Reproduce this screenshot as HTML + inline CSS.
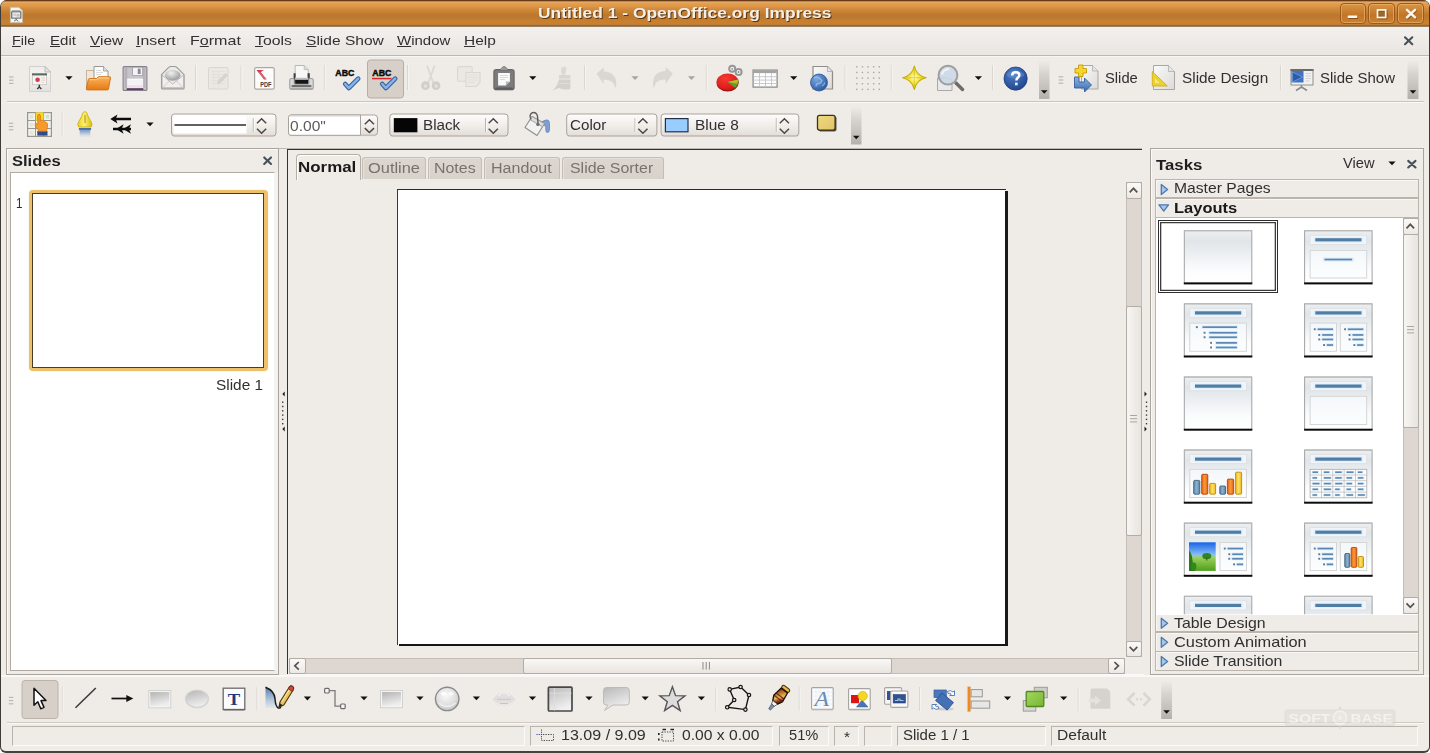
<!DOCTYPE html>
<html><head><meta charset="utf-8"><title>Untitled 1 - OpenOffice.org Impress</title>
<style>
html,body{margin:0;padding:0;background:#fff;}
body{width:1430px;height:753px;overflow:hidden;position:relative;font-family:"Liberation Sans",sans-serif;}
#w div{position:absolute;box-sizing:border-box;}
.t{position:absolute;white-space:nowrap;transform-origin:0 50%;}
u{text-decoration:underline;text-underline-offset:1px;}
#ic{position:absolute;left:0;top:0;}
</style></head>
<body><div id="w">
<div style="left:0px;top:0px;width:1430px;height:753px;background:#efebe7;border:1px solid #3e3a36;border-bottom:2px solid #45413d;border-radius:7px 7px 6px 6px;"></div>
<div style="left:1px;top:0px;width:1428px;height:27px;border-radius:6px 6px 0 0;background:linear-gradient(#6b3a14 0,#6b3a14 0.8px,#b98246 1.4px,#e2aa6a 2.2px,#e0a45c 3px,#de9c48 4.5px,#e09a44 6px,#d88a48 8px,#cd8836 10px,#c4842c 12px,#be7632 15px,#bc7a30 18px,#c8802c 21px,#cc7f2c 23px,#c2803a 24.4px,#8e6c40 25.2px,#866640 26px,#b09c80 27px);"></div>
<div style="left:1339.5px;top:3px;width:26.5px;height:21px;border:1px solid #9c5a1c;border-radius:4px;background:linear-gradient(#d89444,#c27526 60%,#cc8232);box-shadow:inset 0 0 0 1px rgba(240,190,120,.55);"></div>
<div style="left:1368.2px;top:3px;width:26.5px;height:21px;border:1px solid #9c5a1c;border-radius:4px;background:linear-gradient(#d89444,#c27526 60%,#cc8232);box-shadow:inset 0 0 0 1px rgba(240,190,120,.55);"></div>
<div style="left:1397.3px;top:3px;width:26.5px;height:21px;border:1px solid #9c5a1c;border-radius:4px;background:linear-gradient(#d89444,#c27526 60%,#cc8232);box-shadow:inset 0 0 0 1px rgba(240,190,120,.55);"></div>
<div style="left:1px;top:27px;width:1428px;height:29px;background:linear-gradient(#f3f1ee,#e9e5e1);border-bottom:1px solid #bcb7b0;"></div>
<div style="left:1px;top:56px;width:1428px;height:1px;background:#f8f6f4;"></div>
<div style="left:7px;top:101px;width:1417px;height:1px;background:#c9c4bd;"></div>
<div style="left:7px;top:102px;width:1417px;height:1px;background:#faf9f7;"></div>
<div style="left:6px;top:148px;width:273px;height:527px;border:1px solid #aaa49c;background:#efebe7;box-shadow:inset 1px 1px 0 #fbfaf9;"></div>
<div style="left:274px;top:172.5px;width:4.4px;height:498px;background:#f3f2f0;"></div>
<div style="left:10px;top:172px;width:265px;height:499px;border:1px solid #b0aaa2;border-right:1px solid #f6f5f3;background:#fff;"></div>
<div style="left:29.3px;top:189.7px;width:238.5px;height:180.9px;border-radius:4px;background:#edc06c;box-shadow:0 0 1.5px #f5dcae;"></div>
<div style="left:32.4px;top:193.1px;width:232.1px;height:174.6px;background:#fff;border:1.5px solid #4a3c24;"></div>
<div style="left:279px;top:148px;width:863.3px;height:1px;background:#bdb8b2;"></div>
<div style="left:286.8px;top:148.9px;width:855.5px;height:525.6px;border-left:1.4px solid #34322f;border-top:1.8px solid #34322f;background:#efebe7;"></div>
<div style="left:362.3px;top:156.5px;width:63.3px;height:22.5px;background:linear-gradient(#ddd6cf,#d9d2cb);border:1px solid #c4bdb5;border-bottom:none;border-radius:3px 3px 0 0;box-shadow:inset 1px 1px 0 #e6e0da;"></div>
<div style="left:427.8px;top:156.5px;width:54.5px;height:22.5px;background:linear-gradient(#ddd6cf,#d9d2cb);border:1px solid #c4bdb5;border-bottom:none;border-radius:3px 3px 0 0;box-shadow:inset 1px 1px 0 #e6e0da;"></div>
<div style="left:484px;top:156.5px;width:75.5px;height:22.5px;background:linear-gradient(#ddd6cf,#d9d2cb);border:1px solid #c4bdb5;border-bottom:none;border-radius:3px 3px 0 0;box-shadow:inset 1px 1px 0 #e6e0da;"></div>
<div style="left:561.5px;top:156.5px;width:102.2px;height:22.5px;background:linear-gradient(#ddd6cf,#d9d2cb);border:1px solid #c4bdb5;border-bottom:none;border-radius:3px 3px 0 0;box-shadow:inset 1px 1px 0 #e6e0da;"></div>
<div style="left:296px;top:154px;width:65px;height:25.5px;background:#efebe7;border:1px solid #b5aea6;border-bottom:none;border-radius:4px 4px 0 0;box-shadow:inset 1px 1px 0 #fff;"></div>
<div style="left:397px;top:189px;width:609px;height:456px;background:#fff;border-left:1.4px solid #3a3836;border-top:1.1px solid #2e2a26;"></div>
<div style="left:1005px;top:190.7px;width:3px;height:455.3px;background:#1a1a1a;"></div>
<div style="left:398.8px;top:643.9px;width:609.2px;height:2.1px;background:#161616;"></div>
<div style="left:1125.5px;top:182px;width:16.5px;height:474.5px;background:#ded7d1;border:1px solid #c4bdb5;"></div>
<div style="left:1125.5px;top:182px;width:16.5px;height:16.5px;background:linear-gradient(#fbfaf9,#ece8e4);border:1px solid #b3aca4;border-radius:2px;"></div>
<div style="left:1125.5px;top:640.5px;width:16.5px;height:16.5px;background:linear-gradient(#fbfaf9,#ece8e4);border:1px solid #b3aca4;border-radius:2px;"></div>
<div style="left:1125.5px;top:306px;width:16.5px;height:230px;background:linear-gradient(90deg,#f7f5f3,#e8e4df);border:1px solid #b3aca4;border-radius:2px;"></div>
<div style="left:288.5px;top:657.5px;width:836px;height:16.5px;background:#ded7d1;border:1px solid #c4bdb5;"></div>
<div style="left:288.5px;top:657.5px;width:17px;height:16.5px;background:linear-gradient(#fbfaf9,#ece8e4);border:1px solid #b3aca4;border-radius:2px;"></div>
<div style="left:1108px;top:657.5px;width:16.5px;height:16.5px;background:linear-gradient(#fbfaf9,#ece8e4);border:1px solid #b3aca4;border-radius:2px;"></div>
<div style="left:522.5px;top:657.5px;width:369.5px;height:16.5px;background:linear-gradient(#f9f8f6,#e9e5e0);border:1px solid #b3aca4;border-radius:2px;"></div>
<div style="left:288.5px;top:674px;width:855px;height:1px;background:#faf9f8;"></div>
<div style="left:1150px;top:148px;width:273.5px;height:527px;border:1px solid #aaa49c;background:#efebe7;box-shadow:inset 1px 1px 0 #fbfaf9;"></div>
<div style="left:1154.5px;top:178.7px;width:264px;height:19.6px;border:1px solid #bbb5ad;background:#efebe7;box-shadow:inset 1px 1px 0 #f8f7f5;"></div>
<div style="left:1154.5px;top:198.3px;width:264px;height:19.6px;border:1px solid #bbb5ad;background:#efebe7;box-shadow:inset 1px 1px 0 #f8f7f5;"></div>
<div style="left:1154.5px;top:613px;width:264px;height:19.4px;border:1px solid #bbb5ad;background:#efebe7;box-shadow:inset 1px 1px 0 #f8f7f5;"></div>
<div style="left:1154.5px;top:632px;width:264px;height:19.6px;border:1px solid #bbb5ad;background:#efebe7;box-shadow:inset 1px 1px 0 #f8f7f5;"></div>
<div style="left:1154.5px;top:651.3px;width:264px;height:19.3px;border:1px solid #bbb5ad;background:#efebe7;box-shadow:inset 1px 1px 0 #f8f7f5;"></div>
<div style="left:1154.5px;top:217.6px;width:264px;height:397px;background:#fff;border-left:1px solid #bbb5ad;border-right:1px solid #bbb5ad;"></div>
<div style="left:1402.5px;top:218px;width:16px;height:396px;background:#ded7d1;border:1px solid #c4bdb5;"></div>
<div style="left:1402.5px;top:218px;width:16px;height:16.5px;background:linear-gradient(#fbfaf9,#ece8e4);border:1px solid #b3aca4;border-radius:2px;"></div>
<div style="left:1402.5px;top:597px;width:16px;height:16.5px;background:linear-gradient(#fbfaf9,#ece8e4);border:1px solid #b3aca4;border-radius:2px;"></div>
<div style="left:1402.5px;top:234px;width:16px;height:194px;background:linear-gradient(90deg,#f7f5f3,#e8e4df);border:1px solid #b3aca4;border-radius:2px;"></div>
<div style="left:1157.8px;top:220.3px;width:120.4px;height:72.4px;border:1.3px solid #2e2e2e;background:#fff;box-shadow:inset 0 0 0 1px #fff, inset 0 0 0 2.3px #3c3c3c;"></div>
<div style="left:1px;top:675.3px;width:1428px;height:1.4px;background:#f9f8f6;"></div>
<div style="left:7px;top:722px;width:1417px;height:1px;background:#cfc9c2;"></div>
<div style="left:7px;top:723px;width:1417px;height:1px;background:#faf9f8;"></div>
<div style="left:11.5px;top:725.5px;width:513px;height:20px;border-left:1px solid #b9b3ab;border-top:1px solid #b9b3ab;border-right:1px solid #fbfaf9;border-bottom:1px solid #fbfaf9;"></div>
<div style="left:529.5px;top:725.5px;width:243px;height:20px;border-left:1px solid #b9b3ab;border-top:1px solid #b9b3ab;border-right:1px solid #fbfaf9;border-bottom:1px solid #fbfaf9;"></div>
<div style="left:779px;top:725.5px;width:49.5px;height:20px;border-left:1px solid #b9b3ab;border-top:1px solid #b9b3ab;border-right:1px solid #fbfaf9;border-bottom:1px solid #fbfaf9;"></div>
<div style="left:834px;top:725.5px;width:24.5px;height:20px;border-left:1px solid #b9b3ab;border-top:1px solid #b9b3ab;border-right:1px solid #fbfaf9;border-bottom:1px solid #fbfaf9;"></div>
<div style="left:864px;top:725.5px;width:28px;height:20px;border-left:1px solid #b9b3ab;border-top:1px solid #b9b3ab;border-right:1px solid #fbfaf9;border-bottom:1px solid #fbfaf9;"></div>
<div style="left:896.5px;top:725.5px;width:149px;height:20px;border-left:1px solid #b9b3ab;border-top:1px solid #b9b3ab;border-right:1px solid #fbfaf9;border-bottom:1px solid #fbfaf9;"></div>
<div style="left:1051px;top:725.5px;width:367px;height:20px;border-left:1px solid #b9b3ab;border-top:1px solid #b9b3ab;border-right:1px solid #fbfaf9;border-bottom:1px solid #fbfaf9;"></div>
<svg id="ic" width="1430" height="753" viewBox="0 0 1430 753">
<defs>
<linearGradient id="gpage" x1="0" y1="0" x2="1" y2="1"><stop offset="0" stop-color="#fafafa"/><stop offset="1" stop-color="#dcdad8"/></linearGradient>
<linearGradient id="gfold" x1="0" y1="0" x2="0" y2="1"><stop offset="0" stop-color="#f9b45a"/><stop offset="1" stop-color="#e57a14"/></linearGradient>
<linearGradient id="ggray" x1="0" y1="0" x2="0" y2="1"><stop offset="0" stop-color="#c9c9c9"/><stop offset="1" stop-color="#f4f4f4"/></linearGradient>
<linearGradient id="ggray2" x1="0" y1="0" x2="1" y2="1"><stop offset="0" stop-color="#b8b8b8"/><stop offset="1" stop-color="#ececec"/></linearGradient>
<radialGradient id="gball" cx="0.4" cy="0.3" r="0.7"><stop offset="0" stop-color="#f2f2f2"/><stop offset="1" stop-color="#9a9a9a"/></radialGradient>
<radialGradient id="ghelp" cx="0.4" cy="0.3" r="0.8"><stop offset="0" stop-color="#4f7fc8"/><stop offset="1" stop-color="#1c3f88"/></radialGradient>
<radialGradient id="gglobe" cx="0.35" cy="0.3" r="0.8"><stop offset="0" stop-color="#7aa8e0"/><stop offset="1" stop-color="#23529c"/></radialGradient>
<linearGradient id="gprn" x1="0" y1="0" x2="0" y2="1"><stop offset="0" stop-color="#d8d8d8"/><stop offset="0.5" stop-color="#8a8a8a"/><stop offset="1" stop-color="#c4c4c4"/></linearGradient>
<filter id="blur1"><feGaussianBlur stdDeviation="0.5"/></filter>
<filter id="blur2"><feGaussianBlur stdDeviation="0.9"/></filter>
<linearGradient id="gpage2" x1="0" y1="0" x2="0" y2="1"><stop offset="0" stop-color="#efedeb"/><stop offset="0.35" stop-color="#f3f2f1"/><stop offset="1" stop-color="#e3e1df"/></linearGradient>
<radialGradient id="gpie" cx="0.4" cy="0.3" r="0.8"><stop offset="0" stop-color="#f63a30"/><stop offset="0.7" stop-color="#e01c1c"/><stop offset="1" stop-color="#a81414"/></radialGradient>
<radialGradient id="gstar" cx="0.5" cy="0.5" r="0.5"><stop offset="0" stop-color="#fffde0"/><stop offset="0.350" stop-color="#f6ea4c"/><stop offset="1" stop-color="#e4cc1c"/></radialGradient>
<linearGradient id="ov13" x1="0" y1="0" x2="0" y2="1"><stop offset="0" stop-color="#d8d4cf" stop-opacity="0"/><stop offset="0.35" stop-color="#d4d0cb" stop-opacity="0.9"/><stop offset="1" stop-color="#b4b0ab"/></linearGradient>
<linearGradient id="gblue" x1="0" y1="0" x2="0" y2="1"><stop offset="0" stop-color="#8db3e2"/><stop offset="1" stop-color="#3b6cb0"/></linearGradient>
<linearGradient id="ov15" x1="0" y1="0" x2="0" y2="1"><stop offset="0" stop-color="#d8d4cf" stop-opacity="0"/><stop offset="0.35" stop-color="#d4d0cb" stop-opacity="0.9"/><stop offset="1" stop-color="#b4b0ab"/></linearGradient>
<linearGradient id="gnib" x1="0" y1="0" x2="1" y2="0"><stop offset="0" stop-color="#e8d020"/><stop offset="0.450" stop-color="#fbf07a"/><stop offset="1" stop-color="#d8ba10"/></linearGradient>
<linearGradient id="gpenb" x1="0" y1="0" x2="0" y2="1"><stop offset="0" stop-color="#5f83b4"/><stop offset="0.500" stop-color="#a9bdd8"/><stop offset="1" stop-color="#dfe5ee" stop-opacity="0.300"/></linearGradient>
<linearGradient id="cb18" x1="0" y1="0" x2="0" y2="1"><stop offset="0" stop-color="#fdfdfc"/><stop offset="0.500" stop-color="#f1eeeb"/><stop offset="1" stop-color="#e2ddd8"/></linearGradient>
<linearGradient id="cb19" x1="0" y1="0" x2="0" y2="1"><stop offset="0" stop-color="#fdfdfc"/><stop offset="0.500" stop-color="#f1eeeb"/><stop offset="1" stop-color="#e2ddd8"/></linearGradient>
<linearGradient id="cb20" x1="0" y1="0" x2="0" y2="1"><stop offset="0" stop-color="#fdfdfc"/><stop offset="0.500" stop-color="#f1eeeb"/><stop offset="1" stop-color="#e2ddd8"/></linearGradient>
<linearGradient id="cb21" x1="0" y1="0" x2="0" y2="1"><stop offset="0" stop-color="#fdfdfc"/><stop offset="0.500" stop-color="#f1eeeb"/><stop offset="1" stop-color="#e2ddd8"/></linearGradient>
<linearGradient id="cb22" x1="0" y1="0" x2="0" y2="1"><stop offset="0" stop-color="#fdfdfc"/><stop offset="0.500" stop-color="#f1eeeb"/><stop offset="1" stop-color="#e2ddd8"/></linearGradient>
<linearGradient id="gshd" x1="0" y1="0" x2="1" y2="1"><stop offset="0" stop-color="#f0d880"/><stop offset="1" stop-color="#dfc468"/></linearGradient>
<linearGradient id="ov24" x1="0" y1="0" x2="0" y2="1"><stop offset="0" stop-color="#d8d4cf" stop-opacity="0"/><stop offset="0.35" stop-color="#d4d0cb" stop-opacity="0.9"/><stop offset="1" stop-color="#b4b0ab"/></linearGradient>
<linearGradient id="gshape" x1="0" y1="0" x2="0.300" y2="1"><stop offset="0" stop-color="#b4b4b4"/><stop offset="1" stop-color="#eeeeee"/></linearGradient>
<linearGradient id="gcurve" x1="0" y1="0" x2="0" y2="1"><stop offset="0" stop-color="#4d78ae"/><stop offset="1" stop-color="#d7e1ee" stop-opacity="0.600"/></linearGradient>
<radialGradient id="gsph" cx="0.450" cy="0.350" r="0.700"><stop offset="0" stop-color="#fafafa"/><stop offset="0.600" stop-color="#dedede"/><stop offset="1" stop-color="#c2c2c2"/></radialGradient>
<linearGradient id="gflow" x1="0" y1="0" x2="0.400" y2="1"><stop offset="0" stop-color="#b9b9b9"/><stop offset="1" stop-color="#f0f0f0"/></linearGradient>
<linearGradient id="gglue" x1="0" y1="0" x2="1" y2="1"><stop offset="0" stop-color="#5a1c0c"/><stop offset="0.350" stop-color="#c47c34"/><stop offset="0.550" stop-color="#eab860"/><stop offset="0.750" stop-color="#8a3414"/><stop offset="1" stop-color="#3c1408"/></linearGradient>
<linearGradient id="ggreen" x1="0" y1="0" x2="1" y2="1"><stop offset="0" stop-color="#a4d860"/><stop offset="1" stop-color="#78b432"/></linearGradient>
<linearGradient id="ov31" x1="0" y1="0" x2="0" y2="1"><stop offset="0" stop-color="#d8d4cf" stop-opacity="0"/><stop offset="0.35" stop-color="#d4d0cb" stop-opacity="0.9"/><stop offset="1" stop-color="#b4b0ab"/></linearGradient>
<linearGradient id="gth" x1="0" y1="0" x2="0" y2="1"><stop offset="0" stop-color="#edeff1"/><stop offset="0.200" stop-color="#e0e5e9"/><stop offset="0.750" stop-color="#fbfcfd"/><stop offset="1" stop-color="#ffffff"/></linearGradient>
<linearGradient id="gsky" x1="0" y1="0" x2="0" y2="1"><stop offset="0" stop-color="#1764e6"/><stop offset="0.450" stop-color="#8cc0f6"/><stop offset="0.520" stop-color="#9ed25a"/><stop offset="1" stop-color="#4f9e1e"/></linearGradient>
<linearGradient id="gbb" x1="0" y1="0" x2="1" y2="0"><stop offset="0" stop-color="#5f8ab0"/><stop offset="0.500" stop-color="#8fb2d0"/><stop offset="1" stop-color="#55809f"/></linearGradient>
<linearGradient id="gbo" x1="0" y1="0" x2="1" y2="0"><stop offset="0" stop-color="#e8640f"/><stop offset="0.500" stop-color="#fa9a3a"/><stop offset="1" stop-color="#e46010"/></linearGradient>
<linearGradient id="gby" x1="0" y1="0" x2="1" y2="0"><stop offset="0" stop-color="#f2b91a"/><stop offset="0.500" stop-color="#fde066"/><stop offset="1" stop-color="#efb416"/></linearGradient>
<clipPath id="cliplast"><rect x="1155" y="590" width="247" height="24.300"/></clipPath>
</defs>
<rect x="9" y="76.4" width="4.5" height="1.2" fill="#bdb7af"/>
<rect x="9" y="79.60000000000001" width="4.5" height="1.2" fill="#bdb7af"/>
<rect x="9" y="82.80000000000001" width="4.5" height="1.2" fill="#bdb7af"/>
<g transform="translate(29,66)"><path d="M1.5,26h21" stroke="#7c7c7c" stroke-width="1.700" filter="url(#blur1)"/>
<path d="M21.800 7v18.500" stroke="#9a9a9a" stroke-width="1" filter="url(#blur1)"/>
<path d="M0.500 0.500h15.500l5.500 5.500v19.500h-21z" fill="url(#gpage2)" stroke="#cfccc9" stroke-width="0.900"/>
<path d="M16 0.500v5.500h5.500z" fill="#e6e4e2" stroke="#b4b2b0" stroke-width="0.800"/>
<rect x="3" y="7.300" width="15" height="2.400" fill="#596a5e"/>
<rect x="3.600" y="9.700" width="13.800" height="9" fill="#f7f5f4" stroke="#bfbcb9" stroke-width="0.700"/>
<circle cx="8.600" cy="13.700" r="2.300" fill="#cf3f48"/>
<path d="M12.500 12h3.500M12.500 14.200h3.500M12.500 16.300h2.500" stroke="#e2c4c4" stroke-width="0.800"/>
<path d="M10.300 18.800v2.200M8.200 23l2.100-2l2.100 2" stroke="#3c3c3c" stroke-width="1.500" fill="none"/></g>
<path d="M65.4,76.2h7.2l-3.6,3.8z" fill="#111"/>
<g transform="translate(85.5,65.5)"><path d="M1 5h7l1.500 2h12.500v15h-21z" fill="#f1e7d8" stroke="#c0ad92" stroke-width="0.900"/>
<path d="M8.500 1h9.500l4.500 4.500v10h-14z" fill="#fbfbfb" stroke="#8e8e8c" stroke-width="0.900"/>
<path d="M18 1v4.500h4.500" fill="#dedede" stroke="#8e8e8c" stroke-width="0.700"/>
<path d="M10.500 5h5M10.500 7h7M10.500 9h5" stroke="#cfcfcf" stroke-width="0.700"/>
<path d="M0.800 23.300l2-9.300q0.300-1 1.400-1h6.800l2-1.800h11q1.300 0 1 1.200l-2 11q-0.200 1-1.200 1h-20q-1.200 0-1-1.100z" fill="url(#gfold)" stroke="#d06c0c" stroke-width="0.900"/>
<path d="M4.300 14.200h7l2-1.800h10" stroke="#fcd7a2" stroke-width="0.800" fill="none"/></g>
<g transform="translate(122.5,66)"><path d="M1.6,0.6h21.8q1,0 1,1v21.8q0,1-1,1h-21.8q-1,0-1-1v-21.8q0-1 1-1z" fill="#c6c3ca" stroke="#85828a" stroke-width="1.1"/>
<rect x="2.2" y="2" width="2.600" height="20" fill="#b4b1b9"/>
<rect x="20.200" y="2" width="2.600" height="20" fill="#b4b1b9"/>
<rect x="10.2" y="1.2" width="10" height="8.4" fill="#f4f3f6" stroke="#8d8a92" stroke-width="0.6"/>
<rect x="15.3" y="2.6" width="2.8" height="5.4" fill="#8a8790"/>
<rect x="4.6" y="12.6" width="16" height="9.6" fill="#faf8fb"/>
<rect x="4.6" y="18.8" width="16" height="3.4" fill="#f1dff0"/>
<path d="M4.6,15h16M4.6,17h16" stroke="#e3e0e6" stroke-width="0.6"/>
<rect x="4.2" y="22.2" width="16.6" height="1.8" fill="#5c3f5c"/></g>
<g transform="translate(160.5,65.5)"><path d="M1,9.2l7-7q1.200-1.200 2.600-1.200h3.400q1.400 0 2.600 1.200l7 7v13.200q0 1-1 1h-20.600q-1 0-1-1z" fill="#eceae8" stroke="#9c9a98" stroke-width="1.1"/>
<ellipse cx="12.2" cy="9.8" rx="7.800" ry="5.400" fill="url(#gball)"/>
<path d="M1.6,9.6l10.6,9l10.8-9v12.6h-21.4z" fill="#f1efee" stroke="#b1afad" stroke-width="0.8"/>
<path d="M1.8,22.6l8.2-8.3M23,22.6l-8.2-8.3" stroke="#c4c2c0" stroke-width="0.8"/></g>
<rect x="195.0" y="65" width="1" height="25" fill="#dbd6d0"/><rect x="196.0" y="65" width="1" height="25" fill="#f6f4f1"/>
<g transform="translate(208,67)"><rect x="0.5" y="0.5" width="19.5" height="21.5" rx="1.2" fill="#ebe8e4" stroke="#d9d5d0" stroke-width="1"/>
<path d="M3,4.5h14M3,7.5h14M3,10.5h14M3,13.5h14M3,16.5h14M6,2.5v18M10.5,2.5v18" stroke="#e1ddd8" stroke-width="0.7"/>
<path d="M9.5,16.5l1-3l7-7l2,2l-7,7z" fill="#d7d3ce" stroke="#cfcac5" stroke-width="0.6"/></g>
<rect x="240.5" y="65" width="1" height="25" fill="#dbd6d0"/><rect x="241.5" y="65" width="1" height="25" fill="#f6f4f1"/>
<g transform="translate(254,67)"><rect x="0.6" y="0.6" width="19.6" height="21.6" rx="1.6" fill="#fdfdfd" stroke="#aba7a3" stroke-width="1.2"/>
<path d="M2.5,3l7.5,0.3l-3.4,1.6l6,7.4l-2.6,0.2z" fill="#c62a3e"/>
<path d="M4.4,4.6l7.6,8" stroke="#e48a94" stroke-width="1.6" opacity="0.6"/>
<text x="6.2" y="19.6" font-family="Liberation Sans" font-weight="bold" font-size="6.4" fill="#3a3a3a" textLength="11.4" lengthAdjust="spacingAndGlyphs">PDF</text></g>
<g transform="translate(289,65)"><path d="M6.2,0.5h9l4,4v11h-13z" fill="#f7f7f7" stroke="#aaa" stroke-width="0.8"/>
<path d="M15.2,0.5v4h4" fill="#ddd" stroke="#aaa" stroke-width="0.6"/>
<path d="M4.6,8.2h2v6h12v-6h2.2v10h-16.2z" fill="#3c3c3c"/>
<rect x="6.2" y="12.5" width="13" height="6.2" fill="url(#gprn)"/>
<rect x="6.2" y="15" width="13" height="4" fill="#151515"/>
<path d="M1.8,13.6h3.4v5.6h14.6v-5.6h3.4q1,0 1,1v8.6q0,1-1,1h-21.4q-1,0-1-1v-8.6q0-1 1-1z" fill="#d9d9d9" stroke="#8e8e8e" stroke-width="0.9"/>
<rect x="2.6" y="20" width="19.8" height="2.2" fill="#6e6e6e"/>
<rect x="1.4" y="23.2" width="22.2" height="1.4" fill="#a4a4a4"/></g>
<rect x="323.9" y="65" width="1" height="25" fill="#dbd6d0"/><rect x="324.9" y="65" width="1" height="25" fill="#f6f4f1"/>
<g transform="translate(335,66.6)"><text x="0.300" y="9.900" font-family="Liberation Sans" font-weight="bold" font-size="8.600" fill="#0a0a0a" stroke="#0a0a0a" stroke-width="0.450" textLength="19" lengthAdjust="spacingAndGlyphs">ABC</text><path d="M10.200 17.400l3.600 4l9.400-9.400" stroke="#345f9e" stroke-width="4.600" fill="none" stroke-linecap="round" stroke-linejoin="round"/><path d="M10.200 17.400l3.600 4l9.400-9.400" stroke="#8ab2e6" stroke-width="2.500" fill="none" stroke-linecap="round" stroke-linejoin="round"/></g>
<rect x="367.5" y="60" width="36" height="38" rx="3" fill="#d7d0c8" stroke="#b6aea5" stroke-width="1"/>
<g transform="translate(372,66.6)"><text x="0.300" y="9.900" font-family="Liberation Sans" font-weight="bold" font-size="8.600" fill="#0a0a0a" stroke="#0a0a0a" stroke-width="0.450" textLength="19" lengthAdjust="spacingAndGlyphs">ABC</text><path d="M0 11.900h19.500" stroke="#e03030" stroke-width="1.300"/><path d="M0 12.600l1-0.900l1 0.900l1-0.900l1 0.900l1-0.900l1 0.900l1-0.900l1 0.900l1-0.900l1 0.900l1-0.900l1 0.900l1-0.900l1 0.900l1-0.900l1 0.900l1-0.900l1 0.900l1-0.900" stroke="#d02020" stroke-width="0.800" fill="none"/><path d="M10.200 17.400l3.600 4l9.400-9.400" stroke="#345f9e" stroke-width="4.600" fill="none" stroke-linecap="round" stroke-linejoin="round"/><path d="M10.200 17.400l3.600 4l9.400-9.400" stroke="#8ab2e6" stroke-width="2.500" fill="none" stroke-linecap="round" stroke-linejoin="round"/></g>
<rect x="407.0" y="65" width="1" height="25" fill="#dbd6d0"/><rect x="408.0" y="65" width="1" height="25" fill="#f6f4f1"/>
<g transform="translate(420.5,65.5)"><path d="M6.800 0.800l5.800 16M13.800 0.800l-5.800 16" stroke="#dcd8d3" stroke-width="1.800" stroke-linecap="round"/>
<ellipse cx="5" cy="20.200" rx="4.300" ry="4.400" fill="#d2cec9"/><ellipse cx="15.600" cy="20.200" rx="4.300" ry="4.400" fill="#d2cec9"/>
<ellipse cx="5" cy="20.600" rx="1.500" ry="1.800" fill="#e6e3df"/><ellipse cx="15.600" cy="20.600" rx="1.500" ry="1.800" fill="#e6e3df"/></g>
<g transform="translate(457,66)"><rect x="0.6" y="0.6" width="14.6" height="14.6" rx="1.2" fill="#ebe8e4" stroke="#dbd7d2" stroke-width="1.1"/>
<path d="M9,6.5h14v10l-4,4h-10z" fill="#ece9e5" stroke="#dad6d1" stroke-width="1.1"/>
<path d="M11,9h10M11,11.5h10M11,14h10M11,16.5h7" stroke="#e0dcd7" stroke-width="0.8"/></g>
<g transform="translate(493.5,66)"><path d="M2,3.6h17q1.6,0 1.6,1.6v17q0,1.6-1.6,1.6h-17q-1.6,0-1.6-1.6v-17q0-1.6 1.6-1.6z" fill="#7c7c7c" stroke="#5c5c5c" stroke-width="1"/>
<path d="M6.4,4.4q0-1.6 1.6-2q1.2-2 2.6-2q1.400 0 2.600 2q1.600 0.400 1.600 2z" fill="#9a9a9a" stroke="#6a6a6a" stroke-width="0.7"/>
<path d="M4.600 7h11.800v8.600l-4,4h-7.800z" fill="#fafafa"/>
<path d="M16.400 15.600h-4v4z" fill="#b4b4b4"/>
<path d="M6.500 9.500h8M6.500 11.500h8M6.500 13.500h5" stroke="#d0d0d0" stroke-width="0.8"/>
<rect x="1.5" y="21.600" width="18" height="2" fill="#5a5a5a" rx="1"/></g>
<path d="M529.1999999999999,76.2h7.2l-3.6,3.8z" fill="#111"/>
<g transform="translate(550,66)"><path d="M13,1q1.800-1 3,0.400q0.800 1.200 0 3l-0.800 4.400h-3.600l-0.600-4.400q-0.400-2.400 2-3.400z" fill="#dcd8d3"/>
<rect x="9" y="9" width="11.400" height="3.600" fill="#d9d5d0"/>
<path d="M9,13.600h11.400v9.400q-6,1.600-11.400-1l-7,2.400q5-2.400 7-10.800z" fill="#d4d0cb"/>
<path d="M9,17.500h11.400" stroke="#e3dfda" stroke-width="0.8"/></g>
<rect x="584.0" y="65" width="1" height="25" fill="#dbd6d0"/><rect x="585.0" y="65" width="1" height="25" fill="#f6f4f1"/>
<g transform="translate(596,67)"><path d="M0.500 6.800l7.200-6.300v4q12.600 0.600 12.600 12.600q0 2-1 4q-1-8.600-11.600-8.400v4.400z" fill="#dad6d1"/></g>
<path d="M631.4,76.2h7.2l-3.6,3.8z" fill="#a9a5a0"/>
<g transform="translate(652,66.4)"><path d="M20.800 7.200l-7.200-6.500v4q-12.600 0.600-12.600 12.800q0 2 1 4q1-8.600 11.600-8.400v4.600z" fill="#dad6d1"/></g>
<path d="M687.9,76.2h7.2l-3.6,3.8z" fill="#a9a5a0"/>
<rect x="705.8" y="65" width="1" height="25" fill="#dbd6d0"/><rect x="706.8" y="65" width="1" height="25" fill="#f6f4f1"/>
<g transform="translate(716,64)"><circle cx="16.200" cy="4.800" r="3" fill="#f4f4f4" stroke="#969696" stroke-width="2"/>
<circle cx="22.600" cy="8" r="3" fill="#f4f4f4" stroke="#969696" stroke-width="2"/><circle cx="16.200" cy="4.800" r="0.900" fill="#888"/><circle cx="22.600" cy="8" r="0.900" fill="#888"/>
<ellipse cx="11.600" cy="19" rx="11" ry="8.600" fill="#9c1212"/>
<ellipse cx="11.600" cy="18" rx="11" ry="8.400" fill="url(#gpie)"/>
<path d="M11.600 18l10.600-2.600q1.200 4.400-3.200 8.400z" fill="#5da02c"/>
<path d="M11.600 18l10.600-2.600l-1 4z" fill="#d8d020" opacity="0.700"/></g>
<g transform="translate(752.5,69.5)"><rect x="0.600" y="0.600" width="24" height="17" fill="#fdfdfd" stroke="#858585" stroke-width="1.200"/>
<rect x="1" y="1" width="23.200" height="2.600" fill="#a4a4a4"/>
<path d="M1 7.200h23.200M1 10.600h23.200M1 14h23.200M7 3.600v14M13 3.600v14M19 3.600v14" stroke="#c4c4c4" stroke-width="0.900"/></g>
<path d="M790.1,76.2h7.2l-3.6,3.8z" fill="#111"/>
<g transform="translate(810,66)"><path d="M3 0.500h14.500l5 5v17.500h-19.500z" fill="url(#gpage)" stroke="#8f8d8b" stroke-width="1.200"/>
<path d="M17.500 0.500v5h5" fill="#e2e2e2" stroke="#a3a19f" stroke-width="0.700"/>
<circle cx="9" cy="16.500" r="8.500" fill="url(#gglobe)" stroke="#2c5490" stroke-width="0.800"/>
<path d="M4 12q3-2 5 0t3 2.500q-1 3-3.500 3t-2.500 3M12 20q2-1 3-3.500" stroke="#a9c8ee" stroke-width="1.300" fill="none" opacity="0.700"/></g>
<rect x="844.5" y="65" width="1" height="25" fill="#dbd6d0"/><rect x="845.5" y="65" width="1" height="25" fill="#f6f4f1"/>
<rect x="856.10" y="66.10" width="1.400" height="1.400" fill="#aaa6a1"/>
<rect x="856.10" y="71.75" width="1.400" height="1.400" fill="#aaa6a1"/>
<rect x="856.10" y="77.40" width="1.400" height="1.400" fill="#aaa6a1"/>
<rect x="856.10" y="83.05" width="1.400" height="1.400" fill="#aaa6a1"/>
<rect x="856.10" y="88.70" width="1.400" height="1.400" fill="#aaa6a1"/>
<rect x="861.72" y="66.10" width="1.400" height="1.400" fill="#aaa6a1"/>
<rect x="861.72" y="71.75" width="1.400" height="1.400" fill="#aaa6a1"/>
<rect x="861.72" y="77.40" width="1.400" height="1.400" fill="#aaa6a1"/>
<rect x="861.72" y="83.05" width="1.400" height="1.400" fill="#aaa6a1"/>
<rect x="861.72" y="88.70" width="1.400" height="1.400" fill="#aaa6a1"/>
<rect x="867.34" y="66.10" width="1.400" height="1.400" fill="#aaa6a1"/>
<rect x="867.34" y="71.75" width="1.400" height="1.400" fill="#aaa6a1"/>
<rect x="867.34" y="77.40" width="1.400" height="1.400" fill="#aaa6a1"/>
<rect x="867.34" y="83.05" width="1.400" height="1.400" fill="#aaa6a1"/>
<rect x="867.34" y="88.70" width="1.400" height="1.400" fill="#aaa6a1"/>
<rect x="872.96" y="66.10" width="1.400" height="1.400" fill="#aaa6a1"/>
<rect x="872.96" y="71.75" width="1.400" height="1.400" fill="#aaa6a1"/>
<rect x="872.96" y="77.40" width="1.400" height="1.400" fill="#aaa6a1"/>
<rect x="872.96" y="83.05" width="1.400" height="1.400" fill="#aaa6a1"/>
<rect x="872.96" y="88.70" width="1.400" height="1.400" fill="#aaa6a1"/>
<rect x="878.58" y="66.10" width="1.400" height="1.400" fill="#aaa6a1"/>
<rect x="878.58" y="71.75" width="1.400" height="1.400" fill="#aaa6a1"/>
<rect x="878.58" y="77.40" width="1.400" height="1.400" fill="#aaa6a1"/>
<rect x="878.58" y="83.05" width="1.400" height="1.400" fill="#aaa6a1"/>
<rect x="878.58" y="88.70" width="1.400" height="1.400" fill="#aaa6a1"/>
<rect x="890.8" y="65" width="1" height="25" fill="#dbd6d0"/><rect x="891.8" y="65" width="1" height="25" fill="#f6f4f1"/>
<g transform="translate(902.3,65.5)"><path d="M12 0.500C13.200 6.500 17.500 10.800 23.800 12.200C17.500 13.600 13.200 18 12 24C10.800 18 6.500 13.600 0.400 12.200C6.500 10.800 10.800 6.500 12 0.500Z" fill="url(#gstar)" stroke="#c2a90c" stroke-width="1.100" stroke-linejoin="round"/>
<path d="M12 4v16.500M4 12.200h16" stroke="#c8b418" stroke-width="0.700" opacity="0.800"/></g>
<g transform="translate(936.5,64.5)"><path d="M1 13.500h10l4.500 2v10.500h-14.500z" fill="#e9e9e9" stroke="#a9a9a9" stroke-width="1"/>
<path d="M19.500 18.500l6.500 6.500" stroke="#6c6c6c" stroke-width="3.400" stroke-linecap="round"/>
<circle cx="11.500" cy="10.700" r="9.400" fill="#c9d8e6" fill-opacity="0.850" stroke="#9d9fa1" stroke-width="2"/>
<path d="M5.500 9.500q1.500-4.500 6.500-5" stroke="#eef4fa" stroke-width="1.800" fill="none" stroke-linecap="round"/></g>
<path d="M974.8,76.2h7.2l-3.6,3.8z" fill="#111"/>
<rect x="992.0" y="65" width="1" height="25" fill="#dbd6d0"/><rect x="993.0" y="65" width="1" height="25" fill="#f6f4f1"/>
<g transform="translate(1003.8,66.8)"><circle cx="11.800" cy="11.800" r="11.600" fill="url(#ghelp)" stroke="#1d3e7e" stroke-width="0.800"/>
<path d="M2.500 8q9-9 18.500 0q-2 3-9 3.500t-9.500-3.500z" fill="#7ca3dc" opacity="0.350"/>
<path d="M8.400 8.600q0-3.200 3.600-3.200q3.500 0 3.500 2.900q0 1.700-1.600 2.800q-1.300 0.900-1.300 2.700" stroke="#fff" stroke-width="2.500" fill="none"/>
<rect x="11.200" y="15.800" width="2.700" height="2.700" fill="#d4f0ff"/></g>
<rect x="1039" y="60" width="10.5" height="39" fill="url(#ov13)"/>
<path d="M1040.95,90.2h6.6l-3.3,3.6z" fill="#111"/>
<rect x="1058.7" y="76.2" width="4.5" height="1.2" fill="#bdb7af"/>
<rect x="1058.7" y="79.4" width="4.5" height="1.2" fill="#bdb7af"/>
<rect x="1058.7" y="82.60000000000001" width="4.5" height="1.2" fill="#bdb7af"/>
<g transform="translate(1073,64.5)"><path d="M8.500 1h11l5.500 5.500v18h-16.500z" fill="url(#gpage)" stroke="#a9a7a5" stroke-width="1"/>
<path d="M19.500 1v5.500h5.500" fill="#e4e4e4" stroke="#a9a7a5" stroke-width="0.700"/>
<path d="M1.500 12.500h4.500v5h5.500v-4l7 7l-7 7v-4h-10z" fill="url(#gblue)" stroke="#31609e" stroke-width="0.900" stroke-linejoin="round"/>
<path d="M5.500 0.500h4.500v3.500h3.500v4.500h-3.500v3.500h-4.500v-3.500h-3.500v-4.500h3.500z" fill="#f7d530" stroke="#c79a0a" stroke-width="0.900" stroke-linejoin="round"/></g>
<g transform="translate(1152,65)"><path d="M1.500 0.500h15l6 6v18h-21z" fill="url(#gpage)" stroke="#a9a7a5" stroke-width="1"/>
<path d="M16.500 0.500v6h6" fill="#e4e4ec" stroke="#a9a7a5" stroke-width="0.700"/>
<path d="M0.300 6.500l15 14.500h-15z" fill="#ecd22a" stroke="#c7ac10" stroke-width="0.800"/>
<path d="M3 13.500l4.500 4.500h-4.500z" fill="#f6e98a"/></g>
<rect x="1280.0" y="65" width="1" height="25" fill="#dbd6d0"/><rect x="1281.0" y="65" width="1" height="25" fill="#f6f4f1"/>
<g transform="translate(1290,68.5)"><path d="M11.500 16v3M6 22l5.500-3.500l5.500 3.500" stroke="#8a8a8a" stroke-width="1.500" fill="none"/>
<rect x="1" y="1" width="22" height="15.500" fill="#f1f1f1" stroke="#8f8f8f" stroke-width="1"/>
<rect x="0.500" y="0.500" width="23" height="2" fill="#6b6b6b"/>
<path d="M1.500 2.500h12v11.500h-12z" fill="#3f74c3"/>
<path d="M2.500 3.500l10 5l-10 5z" fill="#2e5caa" stroke="#6c9ade" stroke-width="0.800"/>
<path d="M15.500 5h5.500M15.500 7.500h5.500M15.500 10h5.500M15.500 12.500h4" stroke="#cfcfcf" stroke-width="0.900"/></g>
<rect x="1407.5" y="60" width="11" height="39" fill="url(#ov15)"/>
<path d="M1409.7,90.2h6.6l-3.3,3.6z" fill="#111"/>
<rect x="8.8" y="122.7" width="4.5" height="1.2" fill="#bdb7af"/>
<rect x="8.8" y="125.9" width="4.5" height="1.2" fill="#bdb7af"/>
<rect x="8.8" y="129.1" width="4.5" height="1.2" fill="#bdb7af"/>
<g transform="translate(27,112)"><rect x="0.600" y="0.600" width="23.800" height="23.800" fill="#f1f0ea" stroke="#999691" stroke-width="1.200"/>
<path d="M8.500 0.600v23.800M16.500 0.600v23.800M0.600 8.500h23.800M0.600 16.500h23.800" stroke="#999691" stroke-width="1"/>
<rect x="2.800" y="3" width="3.400" height="3.400" fill="#dfe6d4"/><rect x="18.800" y="3" width="3.400" height="3.400" fill="#cfe2c4"/><rect x="2.800" y="11" width="3.400" height="3.400" fill="#dfe6d4"/><rect x="2.800" y="19" width="3.400" height="3.400" fill="#e4e6dc"/>
<rect x="8.800" y="0.300" width="7.600" height="8.500" fill="#f4dc28"/>
<rect x="10.300" y="19" width="10.200" height="4.600" fill="#2f4a88"/>
<path d="M10.600 3.800q0-1.500 1.400-1.500t1.400 1.500v5l1-0.600q1.200-0.500 1.700 0.600l0.500 0.500q1.200-0.500 1.700 0.700l0.400 0.600q1.500-0.300 1.700 1.300v3.600q0 1.400-0.900 2.700v1h-8l-0.500-1.500l-2.800-4.600q-0.500-1.500 0.900-1.700q1 0 1.700 1.500z" fill="#f59a2e" stroke="#dc780f" stroke-width="0.800"/></g>
<rect x="61.7" y="112" width="1" height="25" fill="#dbd6d0"/><rect x="62.7" y="112" width="1" height="25" fill="#f6f4f1"/>
<g transform="translate(76.5,111.5)"><path d="M8.300 0.400q1-0.600 1.800 0.600q1.200 4 4.600 9.400q1.800 3-0.200 5.100h-12.200q-2-2.100-0.200-5.100q3.400-5.400 4.600-9.400q0.600-1.200 1.600-0.600z" fill="url(#gnib)" stroke="#cdb010" stroke-width="0.900"/>
<path d="M8.500 3.500v8" stroke="#b89c08" stroke-width="1.100"/>
<path d="M2.400 16.500h12.200l-0.800 3v6.500h-10.600v-6.500z" fill="url(#gpenb)"/>
<path d="M2.400 16.500h12.200v1.800h-12.200z" fill="#4d6e9f"/></g>
<path d="M113.500 119h17.500M113 129h18" stroke="#0c0c0c" stroke-width="2.400"/><path d="M110.300 119l7.200-4.400l-1.800 4.400l1.800 4.400z" fill="#0c0c0c"/><path d="M116 129l7.600-4.800l-2 4.800l2 4.800z M123.200 129l7.800-4.800l-2.200 4.800l2.200 4.800z" fill="#0c0c0c"/>
<path d="M146.4,122.4h7.2l-3.6,3.8z" fill="#111"/>
<rect x="171.5" y="114.0" width="104.5" height="22" rx="3" fill="url(#cb18)" stroke="#a9a29a" stroke-width="1"/>
<path d="M173,136.3h101.5" stroke="#cbc5be" stroke-width="0.800"/>
<rect x="252.8" y="118.0" width="1" height="14" fill="#b9b3ab"/><rect x="253.8" y="118.0" width="1" height="14" fill="#fbfaf9"/>
<path d="M257.0,123.2l4.600-4.400l4.600 4.400M257.0,128.8l4.600 4.400l4.600-4.400" stroke="#4a4744" stroke-width="1.500" fill="none"/>
<rect x="173.500" y="115.500" width="73" height="18" fill="#fff"/><rect x="174.500" y="124.300" width="71.500" height="1.400" fill="#1e1e1e"/>
<rect x="288.5" y="115.0" width="89" height="20.3" rx="3" fill="url(#cb19)" stroke="#a9a29a" stroke-width="1"/>
<path d="M290,135.60000000000002h86" stroke="#cbc5be" stroke-width="0.800"/>
<rect x="-100.5" y="119.0" width="1" height="12.3" fill="#b9b3ab"/><rect x="-99.5" y="119.0" width="1" height="12.3" fill="#fbfaf9"/>
<path d="M364.79999999999995,124.2l4.600-4.400l4.600 4.400M364.79999999999995,128.10000000000002l4.600 4.400l4.600-4.400" stroke="#4a4744" stroke-width="1.500" fill="none"/>
<path d="M291 115h69.500v20.300h-69.500q-2.500 0-2.500-2.500v-15.300q0-2.500 2.500-2.500z" fill="#fff" stroke="#a9a29a" stroke-width="1"/>
<path d="M290 116h70" stroke="#d8d4cf" stroke-width="1"/>
<rect x="389.8" y="114.0" width="118.2" height="22" rx="3" fill="url(#cb20)" stroke="#a9a29a" stroke-width="1"/>
<path d="M391.3,136.3h115.2" stroke="#cbc5be" stroke-width="0.800"/>
<rect x="485.0" y="118.0" width="1" height="14" fill="#b9b3ab"/><rect x="486.0" y="118.0" width="1" height="14" fill="#fbfaf9"/>
<path d="M488.7,123.2l4.600-4.400l4.600 4.400M488.7,128.8l4.600 4.400l4.600-4.400" stroke="#4a4744" stroke-width="1.500" fill="none"/>
<rect x="393.800" y="118.100" width="23.600" height="14.200" fill="#050505"/>
<g transform="translate(524.5,112)"><path d="M17 10q5-3 7-1.500q1.500 1.500 0.800 10q-0.300 2-1.800 2t-1.600-2q0.200-4-0.800-5q-1.500-1-4 0z" fill="#7f9fd4" stroke="#5a7dba" stroke-width="0.800"/>
<path d="M7.500 4.500l12.500 7l-7.500 12l-12-8z" fill="#f2f2f2" stroke="#8e8e8e" stroke-width="1.100" stroke-linejoin="round"/>
<path d="M7.500 4.500l12.500 7l-2 3.200l-12.500-7z" fill="#dcdcdc" stroke="#8e8e8e" stroke-width="0.700"/>
<path d="M6.500 7.500q-2.500-5 1.500-6.800q4-1 5 3.500l0.500 7.500" stroke="#5c5c5c" stroke-width="1.400" fill="none"/>
<circle cx="13.400" cy="12.400" r="1.700" fill="#6c6c6c"/></g>
<rect x="566.7" y="114.0" width="90.2" height="22" rx="3" fill="url(#cb21)" stroke="#a9a29a" stroke-width="1"/>
<path d="M568.2,136.3h87.2" stroke="#cbc5be" stroke-width="0.800"/>
<rect x="634.5" y="118.0" width="1" height="14" fill="#b9b3ab"/><rect x="635.5" y="118.0" width="1" height="14" fill="#fbfaf9"/>
<path d="M638.3,123.2l4.600-4.400l4.600 4.400M638.3,128.8l4.600 4.400l4.600-4.400" stroke="#4a4744" stroke-width="1.500" fill="none"/>
<rect x="661.1" y="114.0" width="137.7" height="22" rx="3" fill="url(#cb22)" stroke="#a9a29a" stroke-width="1"/>
<path d="M662.6,136.3h134.7" stroke="#cbc5be" stroke-width="0.800"/>
<rect x="775.8" y="118.0" width="1" height="14" fill="#b9b3ab"/><rect x="776.8" y="118.0" width="1" height="14" fill="#fbfaf9"/>
<path d="M779.8,123.2l4.600-4.400l4.600 4.400M779.8,128.8l4.600 4.400l4.600-4.400" stroke="#4a4744" stroke-width="1.500" fill="none"/>
<rect x="665.400" y="118.600" width="22.600" height="13.200" fill="#99ccff" stroke="#1f3348" stroke-width="1.200"/>
<rect x="818.500" y="116.300" width="18" height="15.200" rx="2" fill="#5c5640" filter="url(#blur1)"/><rect x="817.500" y="115.300" width="17.600" height="14.800" rx="2" fill="url(#gshd)" stroke="#39321c" stroke-width="1.300"/>
<rect x="851" y="106" width="10.5" height="38.5" fill="url(#ov24)"/>
<path d="M852.95,135.7h6.6l-3.3,3.6z" fill="#111"/>
<rect x="8.8" y="696.8" width="4.5" height="1.2" fill="#bdb7af"/>
<rect x="8.8" y="700.0" width="4.5" height="1.2" fill="#bdb7af"/>
<rect x="8.8" y="703.1999999999999" width="4.5" height="1.2" fill="#bdb7af"/>
<rect x="22" y="680.500" width="36" height="38" rx="3" fill="#d7d0c8" stroke="#bcb4ab" stroke-width="1"/>
<path d="M34 688.200v17l3.800-3.400l3 7l3.200-1.400l-3-6.800h5z" fill="#fff" stroke="#111" stroke-width="1.500" stroke-linejoin="round"/>
<rect x="61.8" y="687" width="1" height="24" fill="#dbd6d0"/><rect x="62.8" y="687" width="1" height="24" fill="#f6f4f1"/>
<path d="M75.500 707.800l20.300-19.800" stroke="#3c3c3c" stroke-width="1.600"/>
<path d="M111.500 698.500h17" stroke="#111" stroke-width="1.700"/><path d="M133.300 698.500l-7-3.600v7.200z" fill="#111"/>
<rect x="148.800" y="690.600" width="22" height="17.200" fill="#f6f6f6" stroke="#d2d0ce" stroke-width="1"/><rect x="150.300" y="692.100" width="19" height="14.200" fill="url(#gshape)"/>
<ellipse cx="197" cy="699.700" rx="11.500" ry="8.800" fill="#d8d6d4" opacity="0.600"/><ellipse cx="197" cy="698.700" rx="11.400" ry="8.600" fill="url(#gshape)" stroke="#d4d2d0" stroke-width="1.200"/>
<g transform="translate(222.5,687.5)"><rect x="0.700" y="0.700" width="21.600" height="21.300" fill="#fcfcfc" stroke="#6c6c6c" stroke-width="1.300"/>
<path d="M1 22.500h21" stroke="#555" stroke-width="0.800"/>
<text x="5.200" y="17.300" font-family="Liberation Serif" font-weight="bold" font-size="16" fill="#1d3b7c" textLength="12.400" lengthAdjust="spacingAndGlyphs">T</text></g>
<rect x="256.5" y="687" width="1" height="24" fill="#dbd6d0"/><rect x="257.5" y="687" width="1" height="24" fill="#f6f4f1"/>
<g transform="translate(265,685)"><path d="M0.500 2.200q9 3.500 9.500 11.500t3.500 9.300h-13z" fill="url(#gcurve)"/>
<path d="M0.500 2.200q9 3.500 9.500 11.500t3.500 9.300q2.200 0.600 2.200-1.800" stroke="#1c1c1c" stroke-width="1.500" fill="none"/>
<path d="M14 22l1-5l9.300-15q1.600-1.800 3.400-0.600q1.700 1.400 0.600 3.400l-9.500 15.200z" fill="#e8c25a" stroke="#4a3612" stroke-width="1.100"/>
<path d="M17 16.500l8-13" stroke="#f6e4a4" stroke-width="1.200"/>
<path d="M24.300 2q1.600-1.800 3.400-0.600q1.700 1.400 0.600 3.400l-1 1.600l-4-2.600z" fill="#d4483a" stroke="#6a2018" stroke-width="0.800"/>
<path d="M14 22l0.800-3.800l3 2z" fill="#222"/></g>
<path d="M303.79999999999995,696.6h7.2l-3.6,3.8z" fill="#111"/>
<path d="M329.500 690.600h5.500v15.600h5.500" stroke="#7c7c7c" stroke-width="1.300" fill="none"/><rect x="324.600" y="688.400" width="4.600" height="4.600" rx="1" fill="#f4f4f4" stroke="#6c6c6c" stroke-width="1.200"/><rect x="340.600" y="704" width="4.600" height="4.600" rx="1" fill="#f4f4f4" stroke="#6c6c6c" stroke-width="1.200"/>
<path d="M360.4,696.5h7.2l-3.6,3.8z" fill="#111"/>
<rect x="380.500" y="690.500" width="22" height="17.200" fill="#f6f6f6" stroke="#d2d0ce" stroke-width="1"/><rect x="382" y="692" width="19" height="14.200" fill="url(#gshape)"/>
<path d="M416.4,696.5h7.2l-3.6,3.8z" fill="#111"/>
<circle cx="447.200" cy="698.900" r="11.700" fill="url(#gsph)" stroke="#8a8a8a" stroke-width="1.400"/><ellipse cx="443.500" cy="693.800" rx="2.800" ry="1.800" fill="#fff" opacity="0.900"/><ellipse cx="451" cy="693.800" rx="2.800" ry="1.800" fill="#fff" opacity="0.700"/><path d="M439 703q8 7 16.500 0" stroke="#f4f4f4" stroke-width="1.600" fill="none" opacity="0.800"/>
<path d="M472.79999999999995,696.5h7.2l-3.6,3.8z" fill="#111"/>
<path d="M491 699.300l8-7.600v3.400l2-2h6l2 2v-3.400l8 7.600l-8 7.600v-3.400h-10v3.400z" fill="#e1dfdd" stroke="#f9f9f9" stroke-width="1.600" stroke-linejoin="round"/><path d="M491 699.300l8-7.600v3.400l2-2h6l2 2v-3.400l8 7.600l-8 7.600v-3.400h-10v3.400z" fill="none" stroke="#d2d0ce" stroke-width="0.600" stroke-linejoin="round"/><path d="M497 699.400h14" stroke="#cfcdcb" stroke-width="1.400"/><path d="M500 703.600h8" stroke="#c9c7c5" stroke-width="1.400"/><path d="M494 708.800h20" stroke="#d8d5d1" stroke-width="1.600" filter="url(#blur1)"/>
<path d="M528.9,696.5h7.2l-3.6,3.8z" fill="#111"/>
<rect x="548.400" y="687.100" width="23.600" height="23.900" rx="1" fill="url(#gflow)" stroke="#484848" stroke-width="1.700"/><path d="M554.500 688v22.500M549.500 693.200h22" stroke="#dedede" stroke-width="1" opacity="0.900"/>
<path d="M585.4,696.5h7.2l-3.6,3.8z" fill="#111"/>
<path d="M606.500 687.500h19.800q3 0 3 3v11.500q0 3-3 3h-13.300l-8.500 5.500l3.500-5.500h-1.500q-3 0-3-3v-11.500q0-3 3-3z" fill="url(#gflow)" stroke="#bdbbb9" stroke-width="1"/><path d="M607 707.800h20" stroke="#c9c6c3" stroke-width="1.500" filter="url(#blur1)" opacity="0.700"/>
<path d="M641.6,696.5h7.2l-3.6,3.8z" fill="#111"/>
<polygon points="672.40,686.80 675.57,695.63 684.95,695.92 677.54,701.67 680.16,710.68 672.40,705.40 664.64,710.68 667.26,701.67 659.85,695.92 669.23,695.63" fill="#dcdcdc" stroke="#565656" stroke-width="1.400" stroke-linejoin="miter"/>
<path d="M697.8,696.5h7.2l-3.6,3.8z" fill="#111"/>
<rect x="715.3" y="687" width="1" height="24" fill="#dbd6d0"/><rect x="716.3" y="687" width="1" height="24" fill="#f6f4f1"/>
<polygon points="729.7,689.4 740.6,687 749,695 745.4,709.6 727.2,707.3 734.2,700" fill="none" stroke="#161616" stroke-width="1.400"/>
<circle cx="729.7" cy="689.4" r="1.700" fill="#efebe7" stroke="#161616" stroke-width="1.200"/>
<circle cx="740.6" cy="687" r="1.700" fill="#efebe7" stroke="#161616" stroke-width="1.200"/>
<circle cx="749" cy="695" r="1.700" fill="#efebe7" stroke="#161616" stroke-width="1.200"/>
<circle cx="745.4" cy="709.6" r="1.700" fill="#efebe7" stroke="#161616" stroke-width="1.200"/>
<circle cx="727.2" cy="707.3" r="1.700" fill="#efebe7" stroke="#161616" stroke-width="1.200"/>
<circle cx="734.2" cy="700" r="1.700" fill="#efebe7" stroke="#161616" stroke-width="1.200"/>
<g transform="translate(766,685)"><g transform="rotate(38 11.500 13.500)"><rect x="7.500" y="-1" width="9" height="3.600" rx="1.600" fill="#e8b84a" stroke="#3a2a0a" stroke-width="1"/>
<path d="M8 3h8l1.500 10l-2.500 5h-6l-2.500-5z" fill="url(#gglue)" stroke="#1c0c04" stroke-width="1.300"/><path d="M6.800 10h10.400M6.600 13h10.800" stroke="#5a1c0c" stroke-width="1.300" opacity="0.800"/>
<path d="M9 18h6l-1.200 3.500h-3.600z" fill="#f4f4f4" stroke="#444" stroke-width="0.700"/>
<path d="M10.300 21.500h3.400l-0.600 5.500h-2.200z" fill="#7f8ea4" stroke="#48566c" stroke-width="0.700"/></g></g>
<rect x="798.7" y="687" width="1" height="24" fill="#dbd6d0"/><rect x="799.7" y="687" width="1" height="24" fill="#f6f4f1"/>
<g transform="translate(811,687)"><rect x="0.600" y="0.600" width="21.600" height="21.600" rx="1" fill="#f9fbfd" stroke="#a5a3a1" stroke-width="1.100"/>
<path d="M1.500 5h20M1.500 9h20M1.500 13h20M1.500 17h20M5 1.500v20M9 1.500v20M13 1.500v20M17 1.500v20" stroke="#e3ecf6" stroke-width="0.600"/>
<path d="M1 22.800h21" stroke="#b5b3b1" stroke-width="1" />
<text x="3.600" y="19.200" font-family="Liberation Serif" font-style="italic" font-size="21" fill="#6c8ab0" textLength="14.500" lengthAdjust="spacingAndGlyphs">A</text></g>
<g transform="translate(848,688)"><rect x="0.600" y="0.600" width="21.600" height="20.800" rx="1" fill="#fdfdfd" stroke="#a5a3a1" stroke-width="1.100"/>
<path d="M1 22h21" stroke="#bdbbb9" stroke-width="0.900"/>
<rect x="3" y="7" width="8" height="8.200" fill="#dc1414"/>
<path d="M8.500 19l5.500-7l6 7z" fill="#4a74b4" stroke="#365c98" stroke-width="0.500"/>
<circle cx="14.700" cy="8" r="4.600" fill="#f4d820" stroke="#d4b410" stroke-width="0.700"/></g>
<g transform="translate(884,687)"><rect x="0.600" y="0.600" width="17" height="16.600" rx="1.200" fill="#f6f6f6" stroke="#a7a5a3" stroke-width="1.100"/>
<rect x="3" y="4" width="12" height="9" fill="#34548e"/>
<rect x="6.700" y="4" width="17.200" height="16.400" rx="1.200" fill="#f8f8f8" stroke="#a7a5a3" stroke-width="1.100"/>
<rect x="9.200" y="7.600" width="12.200" height="8.400" fill="#2f5293" stroke="#23407a" stroke-width="0.600"/>
<path d="M11 13.500h3v-1.500h2v1.500h3.500" stroke="#a9c3e6" stroke-width="1.100" fill="none"/></g>
<rect x="919.0" y="687" width="1" height="24" fill="#dbd6d0"/><rect x="920.0" y="687" width="1" height="24" fill="#f6f4f1"/>
<g transform="translate(930,688)"><rect x="4" y="2" width="12.300" height="7.500" fill="#4a78be" stroke="#345c9c" stroke-width="0.700"/>
<ellipse cx="15" cy="21" rx="9" ry="1.600" fill="#bcb8b2" opacity="0.600" filter="url(#blur1)"/><g transform="rotate(40 14.500 13.500)"><rect x="7" y="8.600" width="15" height="9.800" fill="#4470b6" stroke="#2f5492" stroke-width="0.900"/></g>
<path d="M17.500 3.500q3-2 5.500 0.500l1.500-1.200v4.700h-4.700l1.400-1.400q-1.200-1.400-3-0.600z" fill="#fff" stroke="#4a74b4" stroke-width="0.900" stroke-linejoin="round"/>
<path d="M9 20.500q-3 2-5.500-0.500l-1.500 1.200v-4.700h4.700l-1.400 1.400q1.200 1.400 3 0.600z" fill="#fff" stroke="#4a74b4" stroke-width="0.900" stroke-linejoin="round"/></g>
<rect x="967.500" y="686.600" width="3.100" height="25" fill="#ee8a24"/><rect x="966.900" y="686.600" width="0.800" height="25" fill="#f6c48a"/>
<rect x="971.100" y="689.600" width="11.200" height="7.200" fill="#e6e6e6" stroke="#9a9896" stroke-width="1"/><rect x="971.100" y="701" width="18.600" height="7.200" fill="#e6e6e6" stroke="#9a9896" stroke-width="1"/>
<path d="M1003.9,696.5h7.2l-3.6,3.8z" fill="#111"/>
<rect x="1034.300" y="687.300" width="13" height="10.500" fill="#cfcdc8" stroke="#9d9b98" stroke-width="1"/><rect x="1023.300" y="700.600" width="12.500" height="10.500" fill="#d8d6d2" stroke="#9d9b98" stroke-width="1"/><rect x="1026.200" y="691.500" width="17.600" height="15" rx="1" fill="url(#ggreen)" stroke="#4f8a20" stroke-width="1.300"/>
<path d="M1060.1000000000001,696.5h7.2l-3.6,3.8z" fill="#111"/>
<rect x="1077.7" y="687" width="1" height="24" fill="#dbd6d0"/><rect x="1078.7" y="687" width="1" height="24" fill="#f6f4f1"/>
<path d="M1092 688.500h15l3.300 3.300v17h-18.300q-1.500 0-1.500-1.500v-17.300q0-1.500 1.500-1.500z" fill="#d6d2ce"/><path d="M1089 698.500h6v-3l6 5l-6 5v-3h-6z" fill="#e4e1de"/>
<path d="M1134.500 693l-6.300 6.300l6.300 6.300M1143.500 693l6.300 6.300l-6.300 6.300" stroke="#d9d5d1" stroke-width="2.600" fill="none"/><rect x="1136" y="698.300" width="2" height="2" fill="#d9d5d1"/><rect x="1140" y="698.300" width="2" height="2" fill="#d9d5d1"/>
<rect x="1161.2" y="680" width="10.8" height="39" fill="url(#ov31)"/>
<path d="M1163.3000000000002,710.2h6.6l-3.3,3.6z" fill="#111"/>
<g transform="translate(1183.8,230.2)"><rect x="0.500" y="0.500" width="67.500" height="52.500" fill="url(#gth)" stroke="#a2a2a2" stroke-width="1"/><path d="M0.500 0.500h67.500" stroke="#bcbcbc" stroke-width="1"/><rect x="0" y="52.200" width="68.500" height="2" fill="#0c0c0c"/></g>
<g transform="translate(1304.1,230.2)"><rect x="0.500" y="0.500" width="67.500" height="52.500" fill="url(#gth)" stroke="#a2a2a2" stroke-width="1"/><path d="M0.500 0.500h67.500" stroke="#bcbcbc" stroke-width="1"/><rect x="0" y="52.200" width="68.500" height="2" fill="#0c0c0c"/><rect x="6" y="5" width="56.600" height="9.200" fill="#f1f5f9" stroke="#dcdfe2" stroke-width="0.800"/><rect x="9.500" y="6.800" width="49.500" height="5.600" fill="#e2f0fc"/><rect x="11.200" y="8" width="46.200" height="3.200" fill="#4f7da4"/><rect x="6" y="20.2" width="56.6" height="27.599999999999998" fill="#fafcfd" fill-opacity="0.700" stroke="#d2d2d2" stroke-width="0.900"/><rect x="18.500" y="27" width="31.500" height="4.600" fill="#e4f1fc"/><rect x="20.300" y="28.400" width="27.800" height="1.800" fill="#5a88b4"/></g>
<g transform="translate(1183.8,303.3)"><rect x="0.500" y="0.500" width="67.500" height="52.500" fill="url(#gth)" stroke="#a2a2a2" stroke-width="1"/><path d="M0.500 0.500h67.500" stroke="#bcbcbc" stroke-width="1"/><rect x="0" y="52.200" width="68.500" height="2" fill="#0c0c0c"/><rect x="6" y="5" width="56.600" height="9.200" fill="#f1f5f9" stroke="#dcdfe2" stroke-width="0.800"/><rect x="9.500" y="6.800" width="49.500" height="5.600" fill="#e2f0fc"/><rect x="11.200" y="8" width="46.200" height="3.200" fill="#4f7da4"/><rect x="6" y="19.8" width="56.6" height="28.2" fill="#fafcfd" fill-opacity="0.700" stroke="#d2d2d2" stroke-width="0.900"/><rect x="17.7" y="22.2" width="36.400000000000006" height="3.200" fill="#dcecfa"/><rect x="12.1" y="22.900000000000002" width="1.900" height="1.900" fill="#5c7890"/><rect x="18.7" y="23.0" width="34.400000000000006" height="1.700" fill="#5a88b4"/><rect x="24.5" y="27.799999999999997" width="29.6" height="3.200" fill="#dcecfa"/><rect x="19.8" y="28.5" width="1.900" height="1.900" fill="#5c7890"/><rect x="25.5" y="28.599999999999998" width="27.6" height="1.700" fill="#5a88b4"/><rect x="24.5" y="32.3" width="29.6" height="3.200" fill="#dcecfa"/><rect x="19.8" y="33.0" width="1.900" height="1.900" fill="#5c7890"/><rect x="25.5" y="33.1" width="27.6" height="1.700" fill="#5a88b4"/><rect x="31.200000000000003" y="37.9" width="22.9" height="3.200" fill="#dcecfa"/><rect x="26.3" y="38.6" width="1.900" height="1.900" fill="#5c7890"/><rect x="32.2" y="38.7" width="20.9" height="1.700" fill="#5a88b4"/><rect x="31.200000000000003" y="42.5" width="22.9" height="3.200" fill="#dcecfa"/><rect x="26.3" y="43.2" width="1.900" height="1.900" fill="#5c7890"/><rect x="32.2" y="43.300000000000004" width="20.9" height="1.700" fill="#5a88b4"/></g>
<g transform="translate(1304.1,303.3)"><rect x="0.500" y="0.500" width="67.500" height="52.500" fill="url(#gth)" stroke="#a2a2a2" stroke-width="1"/><path d="M0.500 0.500h67.500" stroke="#bcbcbc" stroke-width="1"/><rect x="0" y="52.200" width="68.500" height="2" fill="#0c0c0c"/><rect x="6" y="5" width="56.600" height="9.200" fill="#f1f5f9" stroke="#dcdfe2" stroke-width="0.800"/><rect x="9.500" y="6.800" width="49.500" height="5.600" fill="#e2f0fc"/><rect x="11.200" y="8" width="46.200" height="3.200" fill="#4f7da4"/><rect x="6" y="19.8" width="26.4" height="28.2" fill="#fafcfd" fill-opacity="0.700" stroke="#d2d2d2" stroke-width="0.900"/><rect x="36.2" y="19.8" width="26.4" height="28.2" fill="#fafcfd" fill-opacity="0.700" stroke="#d2d2d2" stroke-width="0.900"/><rect x="12.5" y="24.299999999999997" width="17.4" height="3.200" fill="#dcecfa"/><rect x="9.7" y="25.0" width="1.900" height="1.900" fill="#5c7890"/><rect x="13.5" y="25.099999999999998" width="15.399999999999999" height="1.700" fill="#5a88b4"/><rect x="17.1" y="30.0" width="12.799999999999997" height="3.200" fill="#dcecfa"/><rect x="14.2" y="30.700000000000003" width="1.900" height="1.900" fill="#5c7890"/><rect x="18.1" y="30.8" width="10.799999999999997" height="1.700" fill="#5a88b4"/><rect x="17.1" y="34.5" width="12.799999999999997" height="3.200" fill="#dcecfa"/><rect x="14.2" y="35.2" width="1.900" height="1.900" fill="#5c7890"/><rect x="18.1" y="35.300000000000004" width="10.799999999999997" height="1.700" fill="#5a88b4"/><rect x="21.7" y="40.1" width="8.2" height="3.200" fill="#dcecfa"/><rect x="19" y="40.800000000000004" width="1.900" height="1.900" fill="#5c7890"/><rect x="22.7" y="40.900000000000006" width="6.199999999999999" height="1.700" fill="#5a88b4"/><rect x="42.8" y="24.299999999999997" width="17.400000000000006" height="3.200" fill="#dcecfa"/><rect x="40.0" y="25.0" width="1.900" height="1.900" fill="#5c7890"/><rect x="43.8" y="25.099999999999998" width="15.400000000000006" height="1.700" fill="#5a88b4"/><rect x="47.400000000000006" y="30.0" width="12.799999999999997" height="3.200" fill="#dcecfa"/><rect x="44.5" y="30.700000000000003" width="1.900" height="1.900" fill="#5c7890"/><rect x="48.400000000000006" y="30.8" width="10.799999999999997" height="1.700" fill="#5a88b4"/><rect x="47.400000000000006" y="34.5" width="12.799999999999997" height="3.200" fill="#dcecfa"/><rect x="44.5" y="35.2" width="1.900" height="1.900" fill="#5c7890"/><rect x="48.400000000000006" y="35.300000000000004" width="10.799999999999997" height="1.700" fill="#5a88b4"/><rect x="52.0" y="40.1" width="8.200000000000003" height="3.200" fill="#dcecfa"/><rect x="49.3" y="40.800000000000004" width="1.900" height="1.900" fill="#5c7890"/><rect x="53.0" y="40.900000000000006" width="6.200000000000003" height="1.700" fill="#5a88b4"/></g>
<g transform="translate(1183.8,376.5)"><rect x="0.500" y="0.500" width="67.500" height="52.500" fill="url(#gth)" stroke="#a2a2a2" stroke-width="1"/><path d="M0.500 0.500h67.500" stroke="#bcbcbc" stroke-width="1"/><rect x="0" y="52.200" width="68.500" height="2" fill="#0c0c0c"/><rect x="6" y="5" width="56.600" height="9.200" fill="#f1f5f9" stroke="#dcdfe2" stroke-width="0.800"/><rect x="9.500" y="6.800" width="49.500" height="5.600" fill="#e2f0fc"/><rect x="11.200" y="8" width="46.200" height="3.200" fill="#4f7da4"/></g>
<g transform="translate(1304.1,376.5)"><rect x="0.500" y="0.500" width="67.500" height="52.500" fill="url(#gth)" stroke="#a2a2a2" stroke-width="1"/><path d="M0.500 0.500h67.500" stroke="#bcbcbc" stroke-width="1"/><rect x="0" y="52.200" width="68.500" height="2" fill="#0c0c0c"/><rect x="6" y="5" width="56.600" height="9.200" fill="#f1f5f9" stroke="#dcdfe2" stroke-width="0.800"/><rect x="9.500" y="6.800" width="49.500" height="5.600" fill="#e2f0fc"/><rect x="11.200" y="8" width="46.200" height="3.200" fill="#4f7da4"/><rect x="6" y="19.8" width="56.6" height="28.2" fill="#fafcfd" fill-opacity="0.700" stroke="#d2d2d2" stroke-width="0.900"/></g>
<g transform="translate(1183.8,449.5)"><rect x="0.500" y="0.500" width="67.500" height="52.500" fill="url(#gth)" stroke="#a2a2a2" stroke-width="1"/><path d="M0.500 0.500h67.500" stroke="#bcbcbc" stroke-width="1"/><rect x="0" y="52.200" width="68.500" height="2" fill="#0c0c0c"/><rect x="6" y="5" width="56.600" height="9.200" fill="#f1f5f9" stroke="#dcdfe2" stroke-width="0.800"/><rect x="9.500" y="6.800" width="49.500" height="5.600" fill="#e2f0fc"/><rect x="11.200" y="8" width="46.200" height="3.200" fill="#4f7da4"/><rect x="6" y="19.8" width="56.6" height="28.2" fill="#fafcfd" fill-opacity="0.700" stroke="#d2d2d2" stroke-width="0.900"/><rect x="9.9" y="30.9" width="6.1" height="13.800000000000004" rx="1" fill="url(#gbb)" stroke="#3d5f7e" stroke-width="0.900"/><rect x="17.9" y="24.8" width="6.100000000000001" height="19.900000000000002" rx="1" fill="url(#gbo)" stroke="#b0440c" stroke-width="0.900"/><rect x="25.9" y="33.9" width="5.900000000000002" height="10.800000000000004" rx="1" fill="url(#gby)" stroke="#b88a0e" stroke-width="0.900"/><rect x="36" y="36.5" width="5.799999999999997" height="8.200000000000003" rx="1" fill="url(#gbb)" stroke="#3d5f7e" stroke-width="0.900"/><rect x="43.6" y="29.6" width="6.299999999999997" height="15.100000000000001" rx="1" fill="url(#gbo)" stroke="#b0440c" stroke-width="0.900"/><rect x="51.8" y="22.7" width="6.0" height="22.000000000000004" rx="1" fill="url(#gby)" stroke="#b88a0e" stroke-width="0.900"/></g>
<g transform="translate(1304.1,449.5)"><rect x="0.500" y="0.500" width="67.500" height="52.500" fill="url(#gth)" stroke="#a2a2a2" stroke-width="1"/><path d="M0.500 0.500h67.500" stroke="#bcbcbc" stroke-width="1"/><rect x="0" y="52.200" width="68.500" height="2" fill="#0c0c0c"/><rect x="6" y="5" width="56.600" height="9.200" fill="#f1f5f9" stroke="#dcdfe2" stroke-width="0.800"/><rect x="9.500" y="6.800" width="49.500" height="5.600" fill="#e2f0fc"/><rect x="11.200" y="8" width="46.200" height="3.200" fill="#4f7da4"/><rect x="6" y="19.800" width="56.700" height="28.500" fill="#fff" stroke="#a8a8a8" stroke-width="0.800"/><path d="M17.34 19.800v28.500M6 25.50h56.700" stroke="#b4b4b4" stroke-width="0.700"/><path d="M28.68 19.800v28.500M6 31.20h56.700" stroke="#b4b4b4" stroke-width="0.700"/><path d="M40.02 19.800v28.500M6 36.90h56.700" stroke="#b4b4b4" stroke-width="0.700"/><path d="M51.36 19.800v28.500M6 42.60h56.700" stroke="#b4b4b4" stroke-width="0.700"/><rect x="7.60" y="21.30" width="7.5" height="2.900" fill="#deeefa"/><rect x="8.40" y="21.90" width="5.5" height="1.600" fill="#5a88b4"/><rect x="18.94" y="21.30" width="7.5" height="2.900" fill="#deeefa"/><rect x="19.74" y="21.90" width="5.5" height="1.600" fill="#5a88b4"/><rect x="30.28" y="21.30" width="8.5" height="2.900" fill="#deeefa"/><rect x="31.08" y="21.90" width="6.5" height="1.600" fill="#5a88b4"/><rect x="41.62" y="21.30" width="9" height="2.900" fill="#deeefa"/><rect x="42.42" y="21.90" width="7" height="1.600" fill="#5a88b4"/><rect x="52.96" y="21.30" width="6.5" height="2.900" fill="#deeefa"/><rect x="53.76" y="21.90" width="4.5" height="1.600" fill="#5a88b4"/><rect x="7.60" y="27.00" width="6.5" height="2.900" fill="#deeefa"/><rect x="8.40" y="27.60" width="4.5" height="1.600" fill="#5a88b4"/><rect x="18.94" y="27.00" width="9" height="2.900" fill="#deeefa"/><rect x="19.74" y="27.60" width="7" height="1.600" fill="#5a88b4"/><rect x="30.28" y="27.00" width="8.5" height="2.900" fill="#deeefa"/><rect x="31.08" y="27.60" width="6.5" height="1.600" fill="#5a88b4"/><rect x="41.62" y="27.00" width="7.5" height="2.900" fill="#deeefa"/><rect x="42.42" y="27.60" width="5.5" height="1.600" fill="#5a88b4"/><rect x="52.96" y="27.00" width="7.5" height="2.900" fill="#deeefa"/><rect x="53.76" y="27.60" width="5.5" height="1.600" fill="#5a88b4"/><rect x="7.60" y="32.70" width="9" height="2.900" fill="#deeefa"/><rect x="8.40" y="33.30" width="7" height="1.600" fill="#5a88b4"/><rect x="18.94" y="32.70" width="9" height="2.900" fill="#deeefa"/><rect x="19.74" y="33.30" width="7" height="1.600" fill="#5a88b4"/><rect x="30.28" y="32.70" width="9" height="2.900" fill="#deeefa"/><rect x="31.08" y="33.30" width="7" height="1.600" fill="#5a88b4"/><rect x="41.62" y="32.70" width="7.5" height="2.900" fill="#deeefa"/><rect x="42.42" y="33.30" width="5.5" height="1.600" fill="#5a88b4"/><rect x="52.96" y="32.70" width="7.5" height="2.900" fill="#deeefa"/><rect x="53.76" y="33.30" width="5.5" height="1.600" fill="#5a88b4"/><rect x="7.60" y="38.40" width="7.5" height="2.900" fill="#deeefa"/><rect x="8.40" y="39.00" width="5.5" height="1.600" fill="#5a88b4"/><rect x="18.94" y="38.40" width="9" height="2.900" fill="#deeefa"/><rect x="19.74" y="39.00" width="7" height="1.600" fill="#5a88b4"/><rect x="30.28" y="38.40" width="6.5" height="2.900" fill="#deeefa"/><rect x="31.08" y="39.00" width="4.5" height="1.600" fill="#5a88b4"/><rect x="41.62" y="38.40" width="6.5" height="2.900" fill="#deeefa"/><rect x="42.42" y="39.00" width="4.5" height="1.600" fill="#5a88b4"/><rect x="52.96" y="38.40" width="7.5" height="2.900" fill="#deeefa"/><rect x="53.76" y="39.00" width="5.5" height="1.600" fill="#5a88b4"/><rect x="7.60" y="44.10" width="6.5" height="2.900" fill="#deeefa"/><rect x="8.40" y="44.70" width="4.5" height="1.600" fill="#5a88b4"/><rect x="18.94" y="44.10" width="8.5" height="2.900" fill="#deeefa"/><rect x="19.74" y="44.70" width="6.5" height="1.600" fill="#5a88b4"/><rect x="30.28" y="44.10" width="6.5" height="2.900" fill="#deeefa"/><rect x="31.08" y="44.70" width="4.5" height="1.600" fill="#5a88b4"/><rect x="41.62" y="44.10" width="8.5" height="2.900" fill="#deeefa"/><rect x="42.42" y="44.70" width="6.5" height="1.600" fill="#5a88b4"/><rect x="52.96" y="44.10" width="9" height="2.900" fill="#deeefa"/><rect x="53.76" y="44.70" width="7" height="1.600" fill="#5a88b4"/></g>
<g transform="translate(1183.8,522.6)"><rect x="0.500" y="0.500" width="67.500" height="52.500" fill="url(#gth)" stroke="#a2a2a2" stroke-width="1"/><path d="M0.500 0.500h67.500" stroke="#bcbcbc" stroke-width="1"/><rect x="0" y="52.200" width="68.500" height="2" fill="#0c0c0c"/><rect x="6" y="5" width="56.600" height="9.200" fill="#f1f5f9" stroke="#dcdfe2" stroke-width="0.800"/><rect x="9.500" y="6.800" width="49.500" height="5.600" fill="#e2f0fc"/><rect x="11.200" y="8" width="46.200" height="3.200" fill="#4f7da4"/><rect x="5.200" y="19.700" width="26.700" height="28.600" fill="url(#gsky)"/><path d="M5.200 28q3 3 3.500 10t3 10.300h-6.500z" fill="#2b7a1c"/><ellipse cx="23" cy="33.500" rx="4.500" ry="3.200" fill="#2f8420"/><rect x="22.500" y="35" width="1" height="3" fill="#3a5a1c"/><ellipse cx="10" cy="44" rx="2.600" ry="4" fill="#2f8a1c"/><rect x="36.2" y="19.8" width="26.4" height="28.2" fill="#fafcfd" fill-opacity="0.700" stroke="#d2d2d2" stroke-width="0.900"/><rect x="42.8" y="24.299999999999997" width="17.400000000000006" height="3.200" fill="#dcecfa"/><rect x="40.0" y="25.0" width="1.900" height="1.900" fill="#5c7890"/><rect x="43.8" y="25.099999999999998" width="15.400000000000006" height="1.700" fill="#5a88b4"/><rect x="47.400000000000006" y="30.0" width="12.799999999999997" height="3.200" fill="#dcecfa"/><rect x="44.5" y="30.700000000000003" width="1.900" height="1.900" fill="#5c7890"/><rect x="48.400000000000006" y="30.8" width="10.799999999999997" height="1.700" fill="#5a88b4"/><rect x="47.400000000000006" y="34.5" width="12.799999999999997" height="3.200" fill="#dcecfa"/><rect x="44.5" y="35.2" width="1.900" height="1.900" fill="#5c7890"/><rect x="48.400000000000006" y="35.300000000000004" width="10.799999999999997" height="1.700" fill="#5a88b4"/><rect x="52.0" y="40.1" width="8.200000000000003" height="3.200" fill="#dcecfa"/><rect x="49.3" y="40.800000000000004" width="1.900" height="1.900" fill="#5c7890"/><rect x="53.0" y="40.900000000000006" width="6.200000000000003" height="1.700" fill="#5a88b4"/></g>
<g transform="translate(1304.1,522.6)"><rect x="0.500" y="0.500" width="67.500" height="52.500" fill="url(#gth)" stroke="#a2a2a2" stroke-width="1"/><path d="M0.500 0.500h67.500" stroke="#bcbcbc" stroke-width="1"/><rect x="0" y="52.200" width="68.500" height="2" fill="#0c0c0c"/><rect x="6" y="5" width="56.600" height="9.200" fill="#f1f5f9" stroke="#dcdfe2" stroke-width="0.800"/><rect x="9.500" y="6.800" width="49.500" height="5.600" fill="#e2f0fc"/><rect x="11.200" y="8" width="46.200" height="3.200" fill="#4f7da4"/><rect x="6" y="19.8" width="26.4" height="28.2" fill="#fafcfd" fill-opacity="0.700" stroke="#d2d2d2" stroke-width="0.900"/><rect x="36.2" y="19.8" width="26.4" height="28.2" fill="#fafcfd" fill-opacity="0.700" stroke="#d2d2d2" stroke-width="0.900"/><rect x="12.5" y="24.299999999999997" width="17.4" height="3.200" fill="#dcecfa"/><rect x="9.7" y="25.0" width="1.900" height="1.900" fill="#5c7890"/><rect x="13.5" y="25.099999999999998" width="15.399999999999999" height="1.700" fill="#5a88b4"/><rect x="17.1" y="30.0" width="12.799999999999997" height="3.200" fill="#dcecfa"/><rect x="14.2" y="30.700000000000003" width="1.900" height="1.900" fill="#5c7890"/><rect x="18.1" y="30.8" width="10.799999999999997" height="1.700" fill="#5a88b4"/><rect x="17.1" y="34.5" width="12.799999999999997" height="3.200" fill="#dcecfa"/><rect x="14.2" y="35.2" width="1.900" height="1.900" fill="#5c7890"/><rect x="18.1" y="35.300000000000004" width="10.799999999999997" height="1.700" fill="#5a88b4"/><rect x="21.7" y="40.1" width="8.2" height="3.200" fill="#dcecfa"/><rect x="19" y="40.800000000000004" width="1.900" height="1.900" fill="#5c7890"/><rect x="22.7" y="40.900000000000006" width="6.199999999999999" height="1.700" fill="#5a88b4"/><rect x="40.7" y="30.9" width="5.0" height="13.800000000000004" rx="1" fill="url(#gbb)" stroke="#3d5f7e" stroke-width="0.900"/><rect x="47.1" y="24.9" width="5.600000000000001" height="19.800000000000004" rx="1" fill="url(#gbo)" stroke="#b0440c" stroke-width="0.900"/><rect x="54.1" y="33.9" width="5.299999999999997" height="10.800000000000004" rx="1" fill="url(#gby)" stroke="#b88a0e" stroke-width="0.900"/></g>
<g clip-path="url(#cliplast)"><g transform="translate(1183.8,595.8)"><rect x="0.500" y="0.500" width="67.500" height="52.500" fill="url(#gth)" stroke="#a2a2a2" stroke-width="1"/><path d="M0.500 0.500h67.500" stroke="#bcbcbc" stroke-width="1"/><rect x="0" y="52.200" width="68.500" height="2" fill="#0c0c0c"/><rect x="6" y="5" width="56.600" height="9.200" fill="#f1f5f9" stroke="#dcdfe2" stroke-width="0.800"/><rect x="9.500" y="6.800" width="49.500" height="5.600" fill="#e2f0fc"/><rect x="11.200" y="8" width="46.200" height="3.200" fill="#4f7da4"/></g></g>
<g clip-path="url(#cliplast)"><g transform="translate(1304.1,595.8)"><rect x="0.500" y="0.500" width="67.500" height="52.500" fill="url(#gth)" stroke="#a2a2a2" stroke-width="1"/><path d="M0.500 0.500h67.500" stroke="#bcbcbc" stroke-width="1"/><rect x="0" y="52.200" width="68.500" height="2" fill="#0c0c0c"/><rect x="6" y="5" width="56.600" height="9.200" fill="#f1f5f9" stroke="#dcdfe2" stroke-width="0.800"/><rect x="9.500" y="6.800" width="49.500" height="5.600" fill="#e2f0fc"/><rect x="11.200" y="8" width="46.200" height="3.200" fill="#4f7da4"/></g></g>
<path d="M264.2,157.4L271,164M271,157.4L264.2,164" stroke="#47515b" stroke-width="2.1" stroke-linecap="round"/>
<path d="M1408.2,160.9L1415.5,167.5M1415.5,160.9L1408.2,167.5" stroke="#47515b" stroke-width="2.1" stroke-linecap="round"/>
<path d="M1405,37.3L1412.3,44.2M1412.3,37.3L1405,44.2" stroke="#47515b" stroke-width="2.1" stroke-linecap="round"/>
<path d="M1388.4,161.39999999999998h7.2l-3.6,3.8z" fill="#111"/>
<path d="M1129.7,192.3l3.800-4l3.800 4" stroke="#56524d" stroke-width="1.700" fill="none"/>
<path d="M1129.7,646.8l3.800 4l3.800-4" stroke="#56524d" stroke-width="1.700" fill="none"/>
<path d="M298.8,662.0l-4 3.800l4 3.800" stroke="#56524d" stroke-width="1.700" fill="none"/>
<path d="M1114.4,662.0l4 3.800l-4 3.800" stroke="#56524d" stroke-width="1.700" fill="none"/>
<path d="M1406.5,228.3l3.800-4l3.800 4" stroke="#56524d" stroke-width="1.700" fill="none"/>
<path d="M1406.5,603.3l3.800 4l3.800-4" stroke="#56524d" stroke-width="1.700" fill="none"/>
<path d="M1130 415.500h7M1130 418.700h7M1130 421.900h7" stroke="#aaa49c" stroke-width="1"/>
<path d="M1407 326.500h7M1407 329.700h7M1407 332.900h7" stroke="#aaa49c" stroke-width="1"/>
<path d="M703 662v7.500M706.200 662v7.500M709.400 662v7.500" stroke="#8d8780" stroke-width="1"/>
<path d="M284.7,391.5l-2.400 2.500l2.400 2.500z M284.7,426.5l-2.400 2.500l2.400 2.500z" fill="#1c1c1c"/>
<rect x="282.0" y="401.5" width="1.400" height="1.400" fill="#3a3a3a"/>
<rect x="282.0" y="405.8" width="1.400" height="1.400" fill="#3a3a3a"/>
<rect x="282.0" y="410.1" width="1.400" height="1.400" fill="#3a3a3a"/>
<rect x="282.0" y="414.4" width="1.400" height="1.400" fill="#3a3a3a"/>
<rect x="282.0" y="418.7" width="1.400" height="1.400" fill="#3a3a3a"/>
<rect x="282.0" y="423.0" width="1.400" height="1.400" fill="#3a3a3a"/>
<path d="M1144.5,391.5l2.400 2.500l-2.400 2.500z M1144.5,426.5l2.400 2.500l-2.400 2.500z" fill="#1c1c1c"/>
<rect x="1145.8" y="401.5" width="1.400" height="1.400" fill="#3a3a3a"/>
<rect x="1145.8" y="405.8" width="1.400" height="1.400" fill="#3a3a3a"/>
<rect x="1145.8" y="410.1" width="1.400" height="1.400" fill="#3a3a3a"/>
<rect x="1145.8" y="414.4" width="1.400" height="1.400" fill="#3a3a3a"/>
<rect x="1145.8" y="418.7" width="1.400" height="1.400" fill="#3a3a3a"/>
<rect x="1145.8" y="423.0" width="1.400" height="1.400" fill="#3a3a3a"/>
<path d="M1161.3,184.5l6.300 5l-6.300 5z" fill="#a9c6e6" stroke="#4a78b0" stroke-width="1.300" stroke-linejoin="round"/>
<path d="M1159,204.8h9.500l-4.750 6.300z" fill="#a9c6e6" stroke="#4a78b0" stroke-width="1.300" stroke-linejoin="round"/>
<path d="M1161.3,618.2l6.300 5l-6.300 5z" fill="#a9c6e6" stroke="#4a78b0" stroke-width="1.300" stroke-linejoin="round"/>
<path d="M1161.3,637.3l6.300 5l-6.300 5z" fill="#a9c6e6" stroke="#4a78b0" stroke-width="1.300" stroke-linejoin="round"/>
<path d="M1161.3,656.5l6.300 5l-6.300 5z" fill="#a9c6e6" stroke="#4a78b0" stroke-width="1.300" stroke-linejoin="round"/>
<rect x="1347.700" y="15.800" width="9.600" height="2.400" fill="#5a3410" opacity="0.600" transform="translate(0.700,0.800)"/><rect x="1347.700" y="15.600" width="9.600" height="2.400" rx="0.500" fill="#fbf6ee"/>
<rect x="1377.800" y="10.200" width="8.200" height="7.600" fill="none" stroke="#5a3410" stroke-width="1.800" opacity="0.500" transform="translate(0.700,0.800)"/><rect x="1377.500" y="9.900" width="8.200" height="7.600" fill="#7c5a28" fill-opacity="0.550" stroke="#fbf6ee" stroke-width="1.700"/>
<path d="M1407,10l8 7.500M1415,10l-8 7.500" stroke="#5a3410" stroke-width="2.600" opacity="0.500" transform="translate(0.700,0.900)" stroke-linecap="round"/><path d="M1407,9.800l8 7.600M1415,9.800l-8 7.600" stroke="#fbf6ee" stroke-width="2.500" stroke-linecap="round"/>
<g transform="translate(9.8,6.8)"><g transform="scale(1.06,0.96)"><path d="M0.500 0.500h8l3.500 3.500v12.500h-11.500z" fill="#f6f5f2" stroke="#c8b79c" stroke-width="0.800"/>
<rect x="1.800" y="5.200" width="8.600" height="6.600" fill="#e9eef2" stroke="#5d6a72" stroke-width="1.100"/>
<path d="M2 4h8" stroke="#8a94a0" stroke-width="0.800"/>
<path d="M6 12v1.600M4 15l2-1.600l2 1.600" stroke="#5a5a5a" stroke-width="0.900" fill="none"/>
<rect x="3.300" y="7" width="2.500" height="2.500" fill="#d9c8c0"/><rect x="6.300" y="7.400" width="2.800" height="2.800" fill="#c8c0a0"/></g></g>
<path d="M541.500 729.500v11M536.500 734.500h6" stroke="#3c3cc8" stroke-width="1" stroke-dasharray="1.200 1"/><path d="M543 734.500h10.500v6h-12" stroke="#4a4a4a" stroke-width="1" fill="none" stroke-dasharray="1.300 1.200"/>
<rect x="662" y="732" width="11.500" height="9" fill="none" stroke="#4a4a4a" stroke-width="1" stroke-dasharray="1.300 1.200"/><path d="M662.500 729.500h3.500M670.500 729.500h3.500M658.800 733v2M658.800 738.500v2" stroke="#222" stroke-width="1.600"/>
<g opacity="0.550"><rect x="1285" y="710" width="110" height="15.500" rx="2" fill="#dedad5" stroke="#cfcac4" stroke-width="0.800"/><path d="M1340 705.500l2 4.500h-4zM1340 730l2-4.500h-4z" fill="#d4d0ca"/><circle cx="1340" cy="717.700" r="6.600" fill="#e6e3df" stroke="#f6f4f1" stroke-width="1.600"/><circle cx="1340" cy="717.700" r="2" fill="#f6f4f1"/><text x="1288.500" y="723" font-family="Liberation Sans" font-weight="bold" font-size="13" fill="#f9f7f5" textLength="42" lengthAdjust="spacingAndGlyphs">SOFT</text><text x="1350.500" y="723" font-family="Liberation Sans" font-weight="bold" font-size="13" fill="#f9f7f5" textLength="42" lengthAdjust="spacingAndGlyphs">BASE</text></g>
</svg>
<span class="t" style="left:538.5px;top:5.75px;font-size:14px;line-height:16px;color:#5a3412;transform:scaleX(1.2452);font-weight:bold;">Untitled 1 - OpenOffice.org Impress</span>
<span class="t" style="left:537.5px;top:4.75px;font-size:14px;line-height:16px;color:#f4efe6;transform:scaleX(1.2452);font-weight:bold;">Untitled 1 - OpenOffice.org Impress</span>
<span class="t" style="left:12.4px;top:33.27px;font-size:13.5px;line-height:15.5px;color:#303030;transform:scaleX(1.0619);"><u>F</u>ile</span>
<span class="t" style="left:49.5px;top:33.27px;font-size:13.5px;line-height:15.5px;color:#303030;transform:scaleX(1.1176);"><u>E</u>dit</span>
<span class="t" style="left:90px;top:33.27px;font-size:13.5px;line-height:15.5px;color:#303030;transform:scaleX(1.1406);"><u>V</u>iew</span>
<span class="t" style="left:136.4px;top:33.27px;font-size:13.5px;line-height:15.5px;color:#303030;transform:scaleX(1.1729);"><u>I</u>nsert</span>
<span class="t" style="left:190.4px;top:33.27px;font-size:13.5px;line-height:15.5px;color:#303030;transform:scaleX(1.1905);">F<u>o</u>rmat</span>
<span class="t" style="left:255px;top:33.27px;font-size:13.5px;line-height:15.5px;color:#303030;transform:scaleX(1.1708);"><u>T</u>ools</span>
<span class="t" style="left:306.3px;top:33.27px;font-size:13.5px;line-height:15.5px;color:#303030;transform:scaleX(1.1519);"><u>S</u>lide Show</span>
<span class="t" style="left:396.8px;top:33.27px;font-size:13.5px;line-height:15.5px;color:#303030;transform:scaleX(1.1101);"><u>W</u>indow</span>
<span class="t" style="left:463.7px;top:33.27px;font-size:13.5px;line-height:15.5px;color:#303030;transform:scaleX(1.1453);"><u>H</u>elp</span>
<span class="t" style="left:11.5px;top:153.35px;font-size:14px;line-height:16px;color:#1e1e1e;transform:scaleX(1.1808);font-weight:bold;">Slides</span>
<span class="t" style="left:16.4px;top:195.35px;font-size:14px;line-height:16px;color:#2a2a38;transform:scaleX(0.8348);">1</span>
<span class="t" style="left:215.6px;top:377.15px;font-size:14px;line-height:16px;color:#303030;transform:scaleX(1.0979);">Slide 1</span>
<span class="t" style="left:367.5px;top:159.75px;font-size:14px;line-height:16px;color:#77726c;transform:scaleX(1.1722);">Outline</span>
<span class="t" style="left:433.6px;top:159.75px;font-size:14px;line-height:16px;color:#77726c;transform:scaleX(1.1375);">Notes</span>
<span class="t" style="left:491.3px;top:159.75px;font-size:14px;line-height:16px;color:#77726c;transform:scaleX(1.1468);">Handout</span>
<span class="t" style="left:570px;top:159.75px;font-size:14px;line-height:16px;color:#77726c;transform:scaleX(1.1374);">Slide Sorter</span>
<span class="t" style="left:297.7px;top:159.05px;font-size:14px;line-height:16px;color:#1a1a1a;transform:scaleX(1.2087);font-weight:bold;">Normal</span>
<span class="t" style="left:1156px;top:156.55px;font-size:14px;line-height:16px;color:#1e1e1e;transform:scaleX(1.1977);font-weight:bold;">Tasks</span>
<span class="t" style="left:1343.3px;top:154.85px;font-size:14px;line-height:16px;color:#303030;transform:scaleX(1.0467);">View</span>
<span class="t" style="left:1173.9px;top:180.33px;font-size:14.5px;line-height:16.5px;color:#303030;transform:scaleX(1.0809);">Master Pages</span>
<span class="t" style="left:1173.9px;top:199.93px;font-size:14.5px;line-height:16.5px;color:#1a1a1a;transform:scaleX(1.1368);font-weight:bold;">Layouts</span>
<span class="t" style="left:1173.9px;top:614.63px;font-size:14.5px;line-height:16.5px;color:#303030;transform:scaleX(1.0927);">Table Design</span>
<span class="t" style="left:1173.9px;top:633.63px;font-size:14.5px;line-height:16.5px;color:#303030;transform:scaleX(1.1278);">Custom Animation</span>
<span class="t" style="left:1173.9px;top:652.93px;font-size:14.5px;line-height:16.5px;color:#303030;transform:scaleX(1.0924);">Slide Transition</span>
<span class="t" style="left:560.7px;top:727.25px;font-size:14px;line-height:16px;color:#303030;transform:scaleX(1.1467);">13.09 / 9.09</span>
<span class="t" style="left:681.7px;top:727.25px;font-size:14px;line-height:16px;color:#303030;transform:scaleX(1.1187);">0.00 x 0.00</span>
<span class="t" style="left:789px;top:727.25px;font-size:14px;line-height:16px;color:#303030;transform:scaleX(1.0457);">51%</span>
<span class="t" style="left:843.5px;top:728.65px;font-size:14px;line-height:16px;color:#303030;transform:scaleX(1.1013);">*</span>
<span class="t" style="left:903px;top:727.25px;font-size:14px;line-height:16px;color:#303030;transform:scaleX(1.0681);">Slide 1 / 1</span>
<span class="t" style="left:1056.8px;top:727.25px;font-size:14px;line-height:16px;color:#303030;transform:scaleX(1.1114);">Default</span>
<span class="t" style="left:1105px;top:69.95px;font-size:14px;line-height:16px;color:#303030;transform:scaleX(1.0536);">Slide</span>
<span class="t" style="left:1181.6px;top:69.95px;font-size:14px;line-height:16px;color:#303030;transform:scaleX(1.0967);">Slide Design</span>
<span class="t" style="left:1320px;top:69.95px;font-size:14px;line-height:16px;color:#303030;transform:scaleX(1.0708);">Slide Show</span>
<span class="t" style="left:289.9px;top:117.55px;font-size:14px;line-height:16px;color:#5c5c5c;transform:scaleX(1.1112);">0.00&quot;</span>
<span class="t" style="left:423.4px;top:117.05px;font-size:14px;line-height:16px;color:#303030;transform:scaleX(1.0866);">Black</span>
<span class="t" style="left:569.8px;top:117.15px;font-size:14px;line-height:16px;color:#303030;transform:scaleX(1.0850);">Color</span>
<span class="t" style="left:694.5px;top:117.15px;font-size:14px;line-height:16px;color:#303030;transform:scaleX(1.1008);">Blue 8</span>
</div></body></html>
